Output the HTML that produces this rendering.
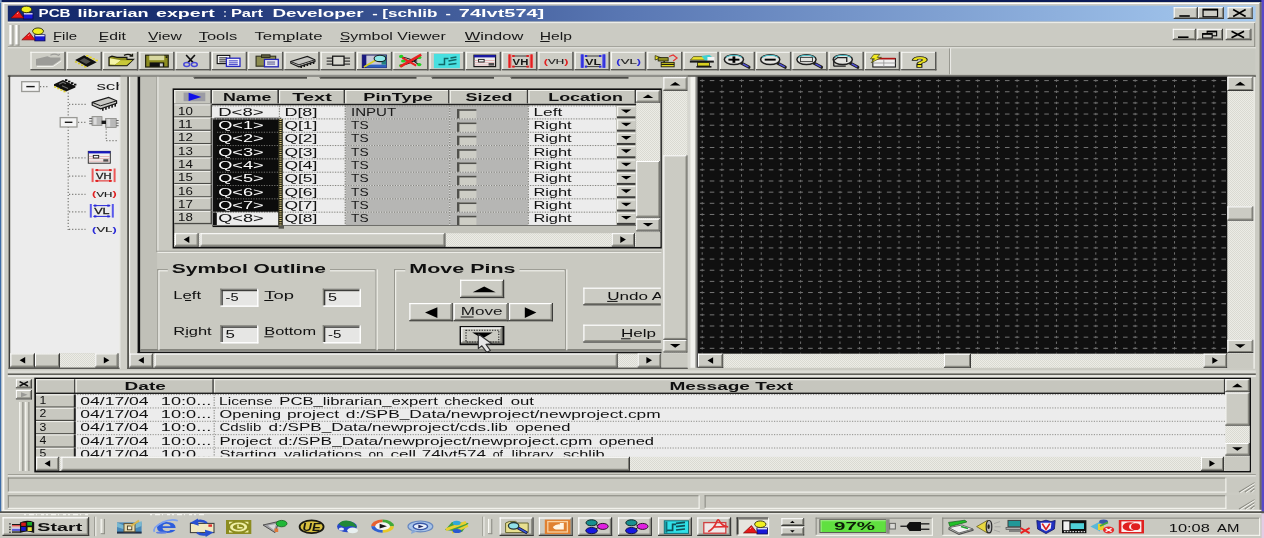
<!DOCTYPE html>
<html><head><meta charset="utf-8"><title>PCB librarian expert</title>
<style>
html,body{margin:0;padding:0;background:#cbcbc3;overflow:hidden}
svg{display:block;font-family:"Liberation Sans",sans-serif;filter:blur(0.5px)}
</style></head><body>
<svg width="1264" height="538" viewBox="0 0 1264 538">
<defs>
<pattern id="dith" width="2" height="2" patternUnits="userSpaceOnUse"><rect width="2" height="2" fill="#ecece6"/><rect width="1" height="1" fill="#dadad2"/><rect x="1" y="1" width="1" height="1" fill="#dadad2"/></pattern>
<linearGradient id="tgrad" x1="0" x2="1" y1="0" y2="0"><stop offset="0" stop-color="#15296c"/><stop offset="0.12" stop-color="#192f70"/><stop offset="0.5" stop-color="#5a78b4"/><stop offset="1" stop-color="#a6caf0"/></linearGradient>
<clipPath id="clipTree"><rect x="10.4" y="76.8" width="108.8" height="276"/></clipPath>
<clipPath id="clipMid"><rect x="140.4" y="76.8" width="520.4" height="273.4"/></clipPath>
</defs>
<rect x="0.00" y="0.00" width="1264.00" height="538.00" fill="#cbcbc3" />
<rect x="0.00" y="0.00" width="1264.00" height="2.00" fill="#0c1c58" />
<rect x="0.00" y="0.00" width="1.50" height="512.00" fill="#3c6ca8" />
<rect x="0.00" y="0.00" width="1.50" height="3.00" fill="#7c9cc8" />
<rect x="1.50" y="2.00" width="2.80" height="509.00" fill="#e4e4e0" />
<rect x="1261.40" y="0.00" width="3.00" height="512.00" fill="#5848c8" />
<rect x="1261.40" y="512.00" width="3.00" height="26.00" fill="#e4cce4" />
<rect x="2.20" y="2.00" width="1259.00" height="1.00" fill="#d3d3cb" />
<rect x="3.20" y="3.00" width="1257.00" height="1.00" fill="#ffffff" />
<rect x="3.20" y="3.00" width="1.00" height="508.00" fill="#ffffff" />
<rect x="1259.40" y="3.00" width="1.00" height="508.00" fill="#88887f" />
<rect x="1260.40" y="2.00" width="1.00" height="510.00" fill="#404040" />
<rect x="7.80" y="5.60" width="1247.80" height="15.80" fill="url(#tgrad)" />
<rect x="23.36" y="13.02" width="9.64" height="5.98" fill="#1818d8" stroke="#080850" stroke-width="0.8"/>
<rect x="23.80" y="13.15" width="8.76" height="1.30" fill="#e8e8f8" />
<ellipse cx="26.43" cy="9.38" rx="5.15" ry="3.25" fill="#f0f020" stroke="#303008" stroke-width="0.9"/>
<path d="M11.10,17.96 L23.58,17.96 L18.33,10.68 Z" fill="#e81818" stroke="#780808" stroke-width="0.7" />
<path d="M17.01,14.06 L18.33,12.50" fill="none" stroke="#ffb0b0" stroke-width="0.9" />
<text x="38.50" y="17.10" font-size="10.2" font-weight="bold" fill="#ffffff" textLength="32.10" lengthAdjust="spacingAndGlyphs" >PCB</text>
<text x="77.40" y="17.10" font-size="10.2" font-weight="bold" fill="#ffffff" textLength="71.20" lengthAdjust="spacingAndGlyphs" >librarian</text>
<text x="156.00" y="17.10" font-size="10.2" font-weight="bold" fill="#ffffff" textLength="58.80" lengthAdjust="spacingAndGlyphs" >expert</text>
<text x="223.40" y="17.10" font-size="10.2" font-weight="bold" fill="#ffffff" textLength="3.00" lengthAdjust="spacingAndGlyphs" >:</text>
<text x="230.90" y="17.10" font-size="10.2" font-weight="bold" fill="#ffffff" textLength="32.00" lengthAdjust="spacingAndGlyphs" >Part</text>
<text x="272.50" y="17.10" font-size="10.2" font-weight="bold" fill="#ffffff" textLength="91.20" lengthAdjust="spacingAndGlyphs" >Developer</text>
<text x="372.30" y="17.10" font-size="10.2" font-weight="bold" fill="#ffffff" textLength="5.50" lengthAdjust="spacingAndGlyphs" >-</text>
<text x="382.30" y="17.10" font-size="10.2" font-weight="bold" fill="#ffffff" textLength="55.10" lengthAdjust="spacingAndGlyphs" >[schlib</text>
<text x="445.60" y="17.10" font-size="10.2" font-weight="bold" fill="#ffffff" textLength="5.40" lengthAdjust="spacingAndGlyphs" >-</text>
<text x="458.80" y="17.10" font-size="10.2" font-weight="bold" fill="#ffffff" textLength="85.50" lengthAdjust="spacingAndGlyphs" >74lvt574]</text>
<rect x="1173.70" y="7.20" width="24.20" height="11.80" fill="#cbcbc3" />
<rect x="1173.70" y="7.20" width="23.20" height="1.00" fill="#ffffff" />
<rect x="1173.70" y="7.20" width="1.00" height="10.80" fill="#ffffff" />
<rect x="1173.70" y="18.00" width="24.20" height="1.00" fill="#3c3c3a" />
<rect x="1196.90" y="7.20" width="1.00" height="11.80" fill="#3c3c3a" />
<rect x="1174.70" y="17.00" width="22.20" height="1.00" fill="#808078" />
<rect x="1195.90" y="8.20" width="1.00" height="9.80" fill="#808078" />
<rect x="1179.30" y="15.20" width="10.50" height="1.60" fill="#000" />
<rect x="1198.20" y="7.20" width="25.70" height="11.80" fill="#cbcbc3" />
<rect x="1198.20" y="7.20" width="24.70" height="1.00" fill="#ffffff" />
<rect x="1198.20" y="7.20" width="1.00" height="10.80" fill="#ffffff" />
<rect x="1198.20" y="18.00" width="25.70" height="1.00" fill="#3c3c3a" />
<rect x="1222.90" y="7.20" width="1.00" height="11.80" fill="#3c3c3a" />
<rect x="1199.20" y="17.00" width="23.70" height="1.00" fill="#808078" />
<rect x="1221.90" y="8.20" width="1.00" height="9.80" fill="#808078" />
<rect x="1203.05" y="9.20" width="14.50" height="7.60" fill="none" stroke="#000" stroke-width="1.2"/>
<rect x="1203.05" y="9.00" width="14.50" height="1.60" fill="#000" />
<rect x="1227.60" y="7.20" width="25.10" height="11.80" fill="#cbcbc3" />
<rect x="1227.60" y="7.20" width="24.10" height="1.00" fill="#ffffff" />
<rect x="1227.60" y="7.20" width="1.00" height="10.80" fill="#ffffff" />
<rect x="1227.60" y="18.00" width="25.10" height="1.00" fill="#3c3c3a" />
<rect x="1251.70" y="7.20" width="1.00" height="11.80" fill="#3c3c3a" />
<rect x="1228.60" y="17.00" width="23.10" height="1.00" fill="#808078" />
<rect x="1250.70" y="8.20" width="1.00" height="9.80" fill="#808078" />
<path d="M1233.15,9.6 L1245.65,16.4 M1245.65,9.6 L1233.15,16.4" fill="none" stroke="#000" stroke-width="1.7" />
<rect x="7.80" y="22.20" width="1247.00" height="0.90" fill="#f4f4f0" />
<rect x="7.80" y="46.40" width="1247.00" height="1.00" fill="#8c8c84" />
<rect x="1254.20" y="23.00" width="1.00" height="24.00" fill="#8c8c84" />
<rect x="7.80" y="47.40" width="1247.80" height="1.00" fill="#fafaf6" />
<rect x="9.40" y="25.00" width="4.00" height="20.50" fill="#dcdcd6" />
<rect x="9.40" y="25.00" width="1.60" height="20.50" fill="#ffffff" />
<rect x="12.40" y="25.00" width="1.10" height="20.50" fill="#8c8c84" />
<rect x="9.40" y="44.60" width="4.00" height="1.00" fill="#8c8c84" />
<rect x="15.40" y="25.00" width="4.00" height="20.50" fill="#dcdcd6" />
<rect x="15.40" y="25.00" width="1.60" height="20.50" fill="#ffffff" />
<rect x="18.40" y="25.00" width="1.10" height="20.50" fill="#8c8c84" />
<rect x="15.40" y="44.60" width="4.00" height="1.00" fill="#8c8c84" />
<rect x="34.79" y="34.87" width="10.21" height="6.03" fill="#1818d8" stroke="#080850" stroke-width="0.8"/>
<rect x="35.26" y="35.01" width="9.28" height="1.31" fill="#e8e8f8" />
<ellipse cx="38.04" cy="31.21" rx="5.45" ry="3.27" fill="#f0f020" stroke="#303008" stroke-width="0.9"/>
<path d="M21.80,39.85 L35.02,39.85 L29.46,32.52 Z" fill="#e81818" stroke="#780808" stroke-width="0.7" />
<path d="M28.06,35.92 L29.46,34.35" fill="none" stroke="#ffb0b0" stroke-width="0.9" />
<text x="53.00" y="39.90" font-size="10.6" fill="#181818" textLength="24.00" lengthAdjust="spacingAndGlyphs" >File</text>
<line x1="53.50" y1="41.50" x2="58.80" y2="41.50" stroke="#181818" stroke-width="1" />
<text x="98.70" y="39.90" font-size="10.6" fill="#181818" textLength="27.10" lengthAdjust="spacingAndGlyphs" >Edit</text>
<line x1="99.20" y1="41.50" x2="106.40" y2="41.50" stroke="#181818" stroke-width="1" />
<text x="148.00" y="39.90" font-size="10.6" fill="#181818" textLength="33.80" lengthAdjust="spacingAndGlyphs" >View</text>
<line x1="148.50" y1="41.50" x2="157.00" y2="41.50" stroke="#181818" stroke-width="1" />
<text x="198.70" y="39.90" font-size="10.6" fill="#181818" textLength="38.50" lengthAdjust="spacingAndGlyphs" >Tools</text>
<line x1="199.00" y1="41.50" x2="206.80" y2="41.50" stroke="#181818" stroke-width="1" />
<text x="254.40" y="39.90" font-size="10.6" fill="#181818" textLength="68.10" lengthAdjust="spacingAndGlyphs" >Template</text>
<line x1="283.50" y1="41.50" x2="291.50" y2="41.50" stroke="#181818" stroke-width="1" />
<text x="339.70" y="39.90" font-size="10.6" fill="#181818" textLength="106.10" lengthAdjust="spacingAndGlyphs" >Symbol Viewer</text>
<line x1="340.20" y1="41.50" x2="349.00" y2="41.50" stroke="#181818" stroke-width="1" />
<text x="464.80" y="39.90" font-size="10.6" fill="#181818" textLength="58.50" lengthAdjust="spacingAndGlyphs" >Window</text>
<line x1="465.00" y1="41.50" x2="479.50" y2="41.50" stroke="#181818" stroke-width="1" />
<text x="539.70" y="39.90" font-size="10.6" fill="#181818" textLength="32.20" lengthAdjust="spacingAndGlyphs" >Help</text>
<line x1="540.20" y1="41.50" x2="549.60" y2="41.50" stroke="#181818" stroke-width="1" />
<rect x="1172.80" y="28.80" width="23.40" height="11.40" fill="#cbcbc3" />
<rect x="1172.80" y="28.80" width="22.40" height="1.00" fill="#ffffff" />
<rect x="1172.80" y="28.80" width="1.00" height="10.40" fill="#ffffff" />
<rect x="1172.80" y="39.20" width="23.40" height="1.00" fill="#3c3c3a" />
<rect x="1195.20" y="28.80" width="1.00" height="11.40" fill="#3c3c3a" />
<rect x="1173.80" y="38.20" width="21.40" height="1.00" fill="#808078" />
<rect x="1194.20" y="29.80" width="1.00" height="9.40" fill="#808078" />
<rect x="1178.00" y="36.40" width="10.50" height="1.60" fill="#000" />
<rect x="1197.30" y="28.80" width="25.70" height="11.40" fill="#cbcbc3" />
<rect x="1197.30" y="28.80" width="24.70" height="1.00" fill="#ffffff" />
<rect x="1197.30" y="28.80" width="1.00" height="10.40" fill="#ffffff" />
<rect x="1197.30" y="39.20" width="25.70" height="1.00" fill="#3c3c3a" />
<rect x="1222.00" y="28.80" width="1.00" height="11.40" fill="#3c3c3a" />
<rect x="1198.30" y="38.20" width="23.70" height="1.00" fill="#808078" />
<rect x="1221.00" y="29.80" width="1.00" height="9.40" fill="#808078" />
<rect x="1207.15" y="31.20" width="9.50" height="4.60" fill="none" stroke="#000" stroke-width="1.1"/>
<rect x="1207.15" y="31.00" width="9.50" height="1.40" fill="#000" />
<rect x="1202.65" y="33.60" width="9.50" height="4.40" fill="#cbcbc3" stroke="#000" stroke-width="1.1"/>
<rect x="1202.65" y="33.40" width="9.50" height="1.40" fill="#000" />
<rect x="1225.70" y="28.80" width="25.70" height="11.40" fill="#cbcbc3" />
<rect x="1225.70" y="28.80" width="24.70" height="1.00" fill="#ffffff" />
<rect x="1225.70" y="28.80" width="1.00" height="10.40" fill="#ffffff" />
<rect x="1225.70" y="39.20" width="25.70" height="1.00" fill="#3c3c3a" />
<rect x="1250.40" y="28.80" width="1.00" height="11.40" fill="#3c3c3a" />
<rect x="1226.70" y="38.20" width="23.70" height="1.00" fill="#808078" />
<rect x="1249.40" y="29.80" width="1.00" height="9.40" fill="#808078" />
<path d="M1231.5500000000002,31.2 L1244.0500000000002,37.8 M1244.0500000000002,31.2 L1231.5500000000002,37.8" fill="none" stroke="#000" stroke-width="1.7" />
<rect x="7.80" y="48.40" width="941.40" height="26.00" fill="#cbcbc3" />
<rect x="949.20" y="48.40" width="1.00" height="26.00" fill="#8c8c84" />
<rect x="950.20" y="48.40" width="1.00" height="26.00" fill="#f4f4f0" />
<rect x="951.20" y="48.40" width="304.00" height="26.00" fill="#c7c8c0" />
<rect x="30.40" y="51.80" width="35.28" height="18.40" fill="#cdcdc5" />
<rect x="30.40" y="51.80" width="35.28" height="1.00" fill="#f8f8f4" />
<rect x="30.40" y="51.80" width="1.20" height="18.40" fill="#f8f8f4" />
<rect x="30.40" y="69.00" width="35.28" height="1.40" fill="#585854" />
<rect x="64.28" y="51.80" width="1.50" height="18.60" fill="#585854" />
<rect x="66.68" y="51.80" width="35.28" height="18.40" fill="#cdcdc5" />
<rect x="66.68" y="51.80" width="35.28" height="1.00" fill="#f8f8f4" />
<rect x="66.68" y="51.80" width="1.20" height="18.40" fill="#f8f8f4" />
<rect x="66.68" y="69.00" width="35.28" height="1.40" fill="#585854" />
<rect x="100.56" y="51.80" width="1.50" height="18.60" fill="#585854" />
<rect x="102.96" y="51.80" width="35.28" height="18.40" fill="#cdcdc5" />
<rect x="102.96" y="51.80" width="35.28" height="1.00" fill="#f8f8f4" />
<rect x="102.96" y="51.80" width="1.20" height="18.40" fill="#f8f8f4" />
<rect x="102.96" y="69.00" width="35.28" height="1.40" fill="#585854" />
<rect x="136.84" y="51.80" width="1.50" height="18.60" fill="#585854" />
<rect x="139.24" y="51.80" width="35.28" height="18.40" fill="#cdcdc5" />
<rect x="139.24" y="51.80" width="35.28" height="1.00" fill="#f8f8f4" />
<rect x="139.24" y="51.80" width="1.20" height="18.40" fill="#f8f8f4" />
<rect x="139.24" y="69.00" width="35.28" height="1.40" fill="#585854" />
<rect x="173.12" y="51.80" width="1.50" height="18.60" fill="#585854" />
<rect x="175.52" y="51.80" width="35.28" height="18.40" fill="#cdcdc5" />
<rect x="175.52" y="51.80" width="35.28" height="1.00" fill="#f8f8f4" />
<rect x="175.52" y="51.80" width="1.20" height="18.40" fill="#f8f8f4" />
<rect x="175.52" y="69.00" width="35.28" height="1.40" fill="#585854" />
<rect x="209.40" y="51.80" width="1.50" height="18.60" fill="#585854" />
<rect x="211.80" y="51.80" width="35.28" height="18.40" fill="#cdcdc5" />
<rect x="211.80" y="51.80" width="35.28" height="1.00" fill="#f8f8f4" />
<rect x="211.80" y="51.80" width="1.20" height="18.40" fill="#f8f8f4" />
<rect x="211.80" y="69.00" width="35.28" height="1.40" fill="#585854" />
<rect x="245.68" y="51.80" width="1.50" height="18.60" fill="#585854" />
<rect x="248.08" y="51.80" width="35.28" height="18.40" fill="#cdcdc5" />
<rect x="248.08" y="51.80" width="35.28" height="1.00" fill="#f8f8f4" />
<rect x="248.08" y="51.80" width="1.20" height="18.40" fill="#f8f8f4" />
<rect x="248.08" y="69.00" width="35.28" height="1.40" fill="#585854" />
<rect x="281.96" y="51.80" width="1.50" height="18.60" fill="#585854" />
<rect x="284.36" y="51.80" width="35.28" height="18.40" fill="#cdcdc5" />
<rect x="284.36" y="51.80" width="35.28" height="1.00" fill="#f8f8f4" />
<rect x="284.36" y="51.80" width="1.20" height="18.40" fill="#f8f8f4" />
<rect x="284.36" y="69.00" width="35.28" height="1.40" fill="#585854" />
<rect x="318.24" y="51.80" width="1.50" height="18.60" fill="#585854" />
<rect x="320.64" y="51.80" width="35.28" height="18.40" fill="#cdcdc5" />
<rect x="320.64" y="51.80" width="35.28" height="1.00" fill="#f8f8f4" />
<rect x="320.64" y="51.80" width="1.20" height="18.40" fill="#f8f8f4" />
<rect x="320.64" y="69.00" width="35.28" height="1.40" fill="#585854" />
<rect x="354.52" y="51.80" width="1.50" height="18.60" fill="#585854" />
<rect x="356.92" y="51.80" width="35.28" height="18.40" fill="#cdcdc5" />
<rect x="356.92" y="51.80" width="35.28" height="1.00" fill="#f8f8f4" />
<rect x="356.92" y="51.80" width="1.20" height="18.40" fill="#f8f8f4" />
<rect x="356.92" y="69.00" width="35.28" height="1.40" fill="#585854" />
<rect x="390.80" y="51.80" width="1.50" height="18.60" fill="#585854" />
<rect x="393.20" y="51.80" width="35.28" height="18.40" fill="#cdcdc5" />
<rect x="393.20" y="51.80" width="35.28" height="1.00" fill="#f8f8f4" />
<rect x="393.20" y="51.80" width="1.20" height="18.40" fill="#f8f8f4" />
<rect x="393.20" y="69.00" width="35.28" height="1.40" fill="#585854" />
<rect x="427.08" y="51.80" width="1.50" height="18.60" fill="#585854" />
<rect x="429.48" y="51.80" width="35.28" height="18.40" fill="#cdcdc5" />
<rect x="429.48" y="51.80" width="35.28" height="1.00" fill="#f8f8f4" />
<rect x="429.48" y="51.80" width="1.20" height="18.40" fill="#f8f8f4" />
<rect x="429.48" y="69.00" width="35.28" height="1.40" fill="#585854" />
<rect x="463.36" y="51.80" width="1.50" height="18.60" fill="#585854" />
<rect x="465.76" y="51.80" width="35.28" height="18.40" fill="#cdcdc5" />
<rect x="465.76" y="51.80" width="35.28" height="1.00" fill="#f8f8f4" />
<rect x="465.76" y="51.80" width="1.20" height="18.40" fill="#f8f8f4" />
<rect x="465.76" y="69.00" width="35.28" height="1.40" fill="#585854" />
<rect x="499.64" y="51.80" width="1.50" height="18.60" fill="#585854" />
<rect x="502.04" y="51.80" width="35.28" height="18.40" fill="#cdcdc5" />
<rect x="502.04" y="51.80" width="35.28" height="1.00" fill="#f8f8f4" />
<rect x="502.04" y="51.80" width="1.20" height="18.40" fill="#f8f8f4" />
<rect x="502.04" y="69.00" width="35.28" height="1.40" fill="#585854" />
<rect x="535.92" y="51.80" width="1.50" height="18.60" fill="#585854" />
<rect x="538.32" y="51.80" width="35.28" height="18.40" fill="#cdcdc5" />
<rect x="538.32" y="51.80" width="35.28" height="1.00" fill="#f8f8f4" />
<rect x="538.32" y="51.80" width="1.20" height="18.40" fill="#f8f8f4" />
<rect x="538.32" y="69.00" width="35.28" height="1.40" fill="#585854" />
<rect x="572.20" y="51.80" width="1.50" height="18.60" fill="#585854" />
<rect x="574.60" y="51.80" width="35.28" height="18.40" fill="#cdcdc5" />
<rect x="574.60" y="51.80" width="35.28" height="1.00" fill="#f8f8f4" />
<rect x="574.60" y="51.80" width="1.20" height="18.40" fill="#f8f8f4" />
<rect x="574.60" y="69.00" width="35.28" height="1.40" fill="#585854" />
<rect x="608.48" y="51.80" width="1.50" height="18.60" fill="#585854" />
<rect x="610.88" y="51.80" width="35.28" height="18.40" fill="#cdcdc5" />
<rect x="610.88" y="51.80" width="35.28" height="1.00" fill="#f8f8f4" />
<rect x="610.88" y="51.80" width="1.20" height="18.40" fill="#f8f8f4" />
<rect x="610.88" y="69.00" width="35.28" height="1.40" fill="#585854" />
<rect x="644.76" y="51.80" width="1.50" height="18.60" fill="#585854" />
<rect x="647.16" y="51.80" width="35.28" height="18.40" fill="#cdcdc5" />
<rect x="647.16" y="51.80" width="35.28" height="1.00" fill="#f8f8f4" />
<rect x="647.16" y="51.80" width="1.20" height="18.40" fill="#f8f8f4" />
<rect x="647.16" y="69.00" width="35.28" height="1.40" fill="#585854" />
<rect x="681.04" y="51.80" width="1.50" height="18.60" fill="#585854" />
<rect x="683.44" y="51.80" width="35.28" height="18.40" fill="#cdcdc5" />
<rect x="683.44" y="51.80" width="35.28" height="1.00" fill="#f8f8f4" />
<rect x="683.44" y="51.80" width="1.20" height="18.40" fill="#f8f8f4" />
<rect x="683.44" y="69.00" width="35.28" height="1.40" fill="#585854" />
<rect x="717.32" y="51.80" width="1.50" height="18.60" fill="#585854" />
<rect x="719.72" y="51.80" width="35.28" height="18.40" fill="#cdcdc5" />
<rect x="719.72" y="51.80" width="35.28" height="1.00" fill="#f8f8f4" />
<rect x="719.72" y="51.80" width="1.20" height="18.40" fill="#f8f8f4" />
<rect x="719.72" y="69.00" width="35.28" height="1.40" fill="#585854" />
<rect x="753.60" y="51.80" width="1.50" height="18.60" fill="#585854" />
<rect x="756.00" y="51.80" width="35.28" height="18.40" fill="#cdcdc5" />
<rect x="756.00" y="51.80" width="35.28" height="1.00" fill="#f8f8f4" />
<rect x="756.00" y="51.80" width="1.20" height="18.40" fill="#f8f8f4" />
<rect x="756.00" y="69.00" width="35.28" height="1.40" fill="#585854" />
<rect x="789.88" y="51.80" width="1.50" height="18.60" fill="#585854" />
<rect x="792.28" y="51.80" width="35.28" height="18.40" fill="#cdcdc5" />
<rect x="792.28" y="51.80" width="35.28" height="1.00" fill="#f8f8f4" />
<rect x="792.28" y="51.80" width="1.20" height="18.40" fill="#f8f8f4" />
<rect x="792.28" y="69.00" width="35.28" height="1.40" fill="#585854" />
<rect x="826.16" y="51.80" width="1.50" height="18.60" fill="#585854" />
<rect x="828.56" y="51.80" width="35.28" height="18.40" fill="#cdcdc5" />
<rect x="828.56" y="51.80" width="35.28" height="1.00" fill="#f8f8f4" />
<rect x="828.56" y="51.80" width="1.20" height="18.40" fill="#f8f8f4" />
<rect x="828.56" y="69.00" width="35.28" height="1.40" fill="#585854" />
<rect x="862.44" y="51.80" width="1.50" height="18.60" fill="#585854" />
<rect x="864.84" y="51.80" width="35.28" height="18.40" fill="#cdcdc5" />
<rect x="864.84" y="51.80" width="35.28" height="1.00" fill="#f8f8f4" />
<rect x="864.84" y="51.80" width="1.20" height="18.40" fill="#f8f8f4" />
<rect x="864.84" y="69.00" width="35.28" height="1.40" fill="#585854" />
<rect x="898.72" y="51.80" width="1.50" height="18.60" fill="#585854" />
<rect x="901.12" y="51.80" width="35.28" height="18.40" fill="#cdcdc5" />
<rect x="901.12" y="51.80" width="35.28" height="1.00" fill="#f8f8f4" />
<rect x="901.12" y="51.80" width="1.20" height="18.40" fill="#f8f8f4" />
<rect x="901.12" y="69.00" width="35.28" height="1.40" fill="#585854" />
<rect x="935.00" y="51.80" width="1.50" height="18.60" fill="#585854" />
<path d="M36.0,65.6 L36.0,59 L47.4,56.2 L50.4,57.6 L60.4,57.6 L60.4,60 L52.4,65.6 Z" fill="#9c9c98" stroke="none" stroke-width="1" />
<path d="M50.4,55.2 q4,-2 8,0 l1.5,-1" fill="none" stroke="#9c9c98" stroke-width="1.2" />
<path d="M37.0,66.4 L53.4,66.4 L61.4,60.8" fill="none" stroke="#f4f4f0" stroke-width="1" />
<path d="M75.18,60 L84.18,55.2 L96.68,62.2 L87.18,67 Z" fill="#101010" stroke="none" stroke-width="1" />
<rect x="86.18" y="55.00" width="2.40" height="1.60" fill="#e8d820" />
<rect x="74.88" y="61.20" width="2.20" height="1.50" fill="#d8c820" />
<rect x="89.28" y="56.55" width="2.40" height="1.60" fill="#e8d820" />
<rect x="77.98" y="62.80" width="2.20" height="1.50" fill="#d8c820" />
<rect x="92.38" y="58.10" width="2.40" height="1.60" fill="#e8d820" />
<rect x="81.08" y="64.40" width="2.20" height="1.50" fill="#d8c820" />
<rect x="95.48" y="59.65" width="2.40" height="1.60" fill="#e8d820" />
<rect x="84.18" y="66.00" width="2.20" height="1.50" fill="#d8c820" />
<path d="M79.68,60.4 L84.18,58 L90.68,61.6 L86.18,64 Z" fill="#50504c" stroke="none" stroke-width="1" />
<path d="M108.96000000000001,65.8 L108.96000000000001,57.4 L111.96000000000001,56.2 L116.96000000000001,57.4 L126.96000000000001,57.4 L126.96000000000001,59.4 L133.56,59.4 L126.96000000000001,65.8 Z" fill="#8c8c20" stroke="#181810" stroke-width="1.1" />
<path d="M109.96000000000001,64.6 L109.96000000000001,58.2 L120.96000000000001,60.2 L114.96000000000001,64.8 Z" fill="#f4f4a8" stroke="none" stroke-width="1" />
<path d="M114.96000000000001,65 L120.96000000000001,60.2 L132.56,60.2 L126.56,65 Z" fill="#c8c838" stroke="none" stroke-width="1" />
<path d="M123.96000000000001,55.4 q4,-2.2 8,0 m0.6,-1.6 l0,2.4 l-3,0" fill="none" stroke="#181810" stroke-width="1.2" />
<rect x="145.64" y="55.20" width="22.60" height="11.80" fill="#8c8c20" stroke="#202010" stroke-width="1.2"/>
<rect x="149.24" y="55.60" width="15.00" height="4.60" fill="#d8d8a0" />
<rect x="149.64" y="62.40" width="14.60" height="4.40" fill="#101010" />
<rect x="159.84" y="63.40" width="3.00" height="3.00" fill="#d0d0d0" />
<rect x="165.64" y="56.20" width="1.80" height="1.80" fill="#202010" />
<path d="M186.12,55 L193.12,62.6 M194.92000000000002,55 L187.92000000000002,62.6" fill="none" stroke="#101010" stroke-width="1.6" />
<ellipse cx="186.72" cy="64.4" rx="2.9" ry="2.0" fill="none" stroke="#4848d8" stroke-width="1.5"/>
<ellipse cx="194.32000000000002" cy="64.4" rx="2.9" ry="2.0" fill="none" stroke="#4848d8" stroke-width="1.5"/>
<rect x="217.20" y="55.40" width="12.60" height="8.20" fill="#f4f4f4" stroke="#101010" stroke-width="1.1"/>
<rect x="219.20" y="57.40" width="8.00" height="0.90" fill="#101010" />
<rect x="219.20" y="59.40" width="8.00" height="0.90" fill="#101010" />
<rect x="219.20" y="61.40" width="8.00" height="0.90" fill="#101010" />
<rect x="226.40" y="58.20" width="13.60" height="8.20" fill="#f4f4f8" stroke="#2828c0" stroke-width="1.3"/>
<rect x="228.80" y="60.40" width="9.00" height="0.90" fill="#2828c0" />
<rect x="228.80" y="62.40" width="9.00" height="0.90" fill="#2828c0" />
<rect x="228.80" y="64.20" width="9.00" height="0.90" fill="#2828c0" />
<rect x="256.08" y="56.20" width="19.60" height="10.00" fill="#8c8c50" stroke="#303020" stroke-width="1.1"/>
<rect x="261.48" y="54.80" width="8.60" height="2.60" fill="#606040" stroke="#202010" stroke-width="0.8"/>
<rect x="264.48" y="59.40" width="13.80" height="7.40" fill="#e8e8f0" stroke="#2828b8" stroke-width="1.3"/>
<rect x="267.08" y="61.60" width="8.00" height="0.90" fill="#404080" />
<rect x="267.08" y="63.60" width="8.00" height="0.90" fill="#404080" />
<path d="M290.76,61.6 L307.36,56.4 L314.96000000000004,59.8 L314.96000000000004,61.6 L298.96000000000004,66.8 L290.76,63.2 Z" fill="#c4c4c0" stroke="#181818" stroke-width="1.1" />
<path d="M290.76,61.6 L298.96000000000004,64.8 L314.96000000000004,59.8" fill="none" stroke="#181818" stroke-width="0.9" />
<rect x="300.36" y="65.60" width="1.60" height="2.40" fill="#181818" />
<rect x="303.46" y="64.60" width="1.60" height="2.40" fill="#181818" />
<rect x="306.56" y="63.60" width="1.60" height="2.40" fill="#181818" />
<rect x="309.66" y="62.60" width="1.60" height="2.40" fill="#181818" />
<rect x="312.76" y="61.60" width="1.60" height="2.40" fill="#181818" />
<rect x="332.64" y="56.20" width="11.40" height="9.00" fill="#d8d8d0" stroke="#181818" stroke-width="1.3"/>
<rect x="326.64" y="57.60" width="6.00" height="1.00" fill="#181818" />
<rect x="344.04" y="57.60" width="6.00" height="1.00" fill="#181818" />
<rect x="326.64" y="60.60" width="6.00" height="1.00" fill="#181818" />
<rect x="344.04" y="60.60" width="6.00" height="1.00" fill="#181818" />
<rect x="326.64" y="63.60" width="6.00" height="1.00" fill="#181818" />
<rect x="344.04" y="63.60" width="6.00" height="1.00" fill="#181818" />
<rect x="362.32" y="55.00" width="24.00" height="12.60" fill="#c8c8d8" stroke="#181860" stroke-width="1"/>
<rect x="362.32" y="55.00" width="4.00" height="12.60" fill="#181880" />
<rect x="366.32" y="64.60" width="20.00" height="3.00" fill="#3060c0" />
<rect x="381.52" y="55.60" width="4.60" height="9.00" fill="#208080" />
<path d="M363.91999999999996,67 L375.91999999999996,60" fill="none" stroke="#d8d020" stroke-width="1.6" />
<ellipse cx="379.91999999999996" cy="58.4" rx="5.8" ry="3.2" fill="#90e8e8" stroke="#182020" stroke-width="1.1"/>
<path d="M401.2,57 q10,1 18,8 M401.2,65 q10,-1 18,-8 M405.2,61 l12,0" fill="none" stroke="#181818" stroke-width="1.1" />
<ellipse cx="401.2" cy="56.4" rx="2.2" ry="1.6" fill="#20d020"/>
<ellipse cx="401.2" cy="65.6" rx="2.2" ry="1.6" fill="#20d020"/>
<ellipse cx="419.2" cy="57.4" rx="2.2" ry="1.6" fill="#20d020"/>
<ellipse cx="419.2" cy="64.6" rx="2.2" ry="1.6" fill="#20d020"/>
<ellipse cx="403.2" cy="61" rx="2.2" ry="1.6" fill="#20d020"/>
<path d="M400.2,66.6 L421.2,54.6" fill="none" stroke="#e82020" stroke-width="2.6" />
<path d="M402.2,57.6 L416.2,65.6" fill="none" stroke="#e82020" stroke-width="2.0" />
<rect x="433.88" y="53.80" width="26.00" height="14.40" fill="#48e0e0" />
<path d="M438.48,64.4 l6,0 l0,-6 l4,0 M448.48,61 l8,-1.4 M448.48,64.4 l8,-1 M450.48,58 l6,-1" fill="none" stroke="#106868" stroke-width="1.5" />
<rect x="473.96" y="55.20" width="21.60" height="11.40" fill="#ececec" stroke="#181818" stroke-width="1.2"/>
<rect x="473.96" y="55.00" width="21.60" height="2.40" fill="#1818a0" />
<rect x="474.56" y="60.00" width="20.00" height="0.70" fill="#e0a0a0" />
<rect x="474.56" y="62.40" width="20.00" height="0.70" fill="#e0a0a0" />
<rect x="474.56" y="64.60" width="20.00" height="0.70" fill="#e0a0a0" />
<rect x="478.56" y="59.40" width="5.60" height="2.60" fill="#f0f0f0" stroke="#181818" stroke-width="0.9"/>
<rect x="488.56" y="63.00" width="5.60" height="2.60" fill="#505050" />
<rect x="508.04" y="54.40" width="3.40" height="13.40" fill="#ec5858" />
<rect x="529.64" y="54.40" width="3.40" height="13.40" fill="#ec5858" />
<rect x="508.84" y="54.40" width="1.40" height="13.40" fill="#e02020" />
<rect x="530.84" y="54.40" width="1.40" height="13.40" fill="#e02020" />
<line x1="512.54" y1="56.00" x2="528.54" y2="56.00" stroke="#303030" stroke-width="0.9" />
<line x1="512.54" y1="66.60" x2="528.54" y2="66.60" stroke="#303030" stroke-width="0.9" />
<rect x="512.24" y="55.00" width="2.40" height="2.00" fill="#e02020" />
<rect x="526.44" y="55.00" width="2.40" height="2.00" fill="#e02020" />
<rect x="512.24" y="65.60" width="2.40" height="2.00" fill="#e02020" />
<rect x="526.44" y="65.60" width="2.40" height="2.00" fill="#e02020" />
<text x="512.64" y="64.70" font-size="9.8" font-weight="bold" fill="#181818" textLength="15.80" lengthAdjust="spacingAndGlyphs" >VH</text>
<text x="543.72" y="63.60" font-size="7.6" font-weight="bold" fill="#e02020" textLength="4.20" lengthAdjust="spacingAndGlyphs" >(</text>
<text x="564.32" y="63.60" font-size="7.6" font-weight="bold" fill="#e02020" textLength="4.20" lengthAdjust="spacingAndGlyphs" >)</text>
<text x="548.12" y="63.80" font-size="7.8" fill="#202020" textLength="16.00" lengthAdjust="spacingAndGlyphs" stroke="#202020" stroke-width="0.15">VH</text>
<rect x="580.60" y="54.40" width="3.40" height="13.40" fill="#5858ec" />
<rect x="602.20" y="54.40" width="3.40" height="13.40" fill="#5858ec" />
<rect x="581.40" y="54.40" width="1.40" height="13.40" fill="#2828d8" />
<rect x="603.40" y="54.40" width="1.40" height="13.40" fill="#2828d8" />
<line x1="585.10" y1="56.00" x2="601.10" y2="56.00" stroke="#303030" stroke-width="0.9" />
<line x1="585.10" y1="66.60" x2="601.10" y2="66.60" stroke="#303030" stroke-width="0.9" />
<rect x="584.80" y="55.00" width="2.40" height="2.00" fill="#2828d8" />
<rect x="599.00" y="55.00" width="2.40" height="2.00" fill="#2828d8" />
<rect x="584.80" y="65.60" width="2.40" height="2.00" fill="#2828d8" />
<rect x="599.00" y="65.60" width="2.40" height="2.00" fill="#2828d8" />
<text x="585.20" y="64.70" font-size="9.8" font-weight="bold" fill="#181818" textLength="15.80" lengthAdjust="spacingAndGlyphs" >VL</text>
<text x="616.28" y="63.60" font-size="7.6" font-weight="bold" fill="#2828d8" textLength="4.20" lengthAdjust="spacingAndGlyphs" >(</text>
<text x="636.88" y="63.60" font-size="7.6" font-weight="bold" fill="#2828d8" textLength="4.20" lengthAdjust="spacingAndGlyphs" >)</text>
<text x="620.68" y="63.80" font-size="7.8" fill="#202020" textLength="16.00" lengthAdjust="spacingAndGlyphs" stroke="#202020" stroke-width="0.15">VL</text>
<path d="M655.16,55.6 L655.16,60 L661.16,57.8 Z" fill="#e8e020" stroke="#303010" stroke-width="0.8" />
<rect x="658.16" y="57.60" width="10.00" height="3.40" fill="#8c8c20" stroke="#202010" stroke-width="0.8"/>
<rect x="661.16" y="62.40" width="13.00" height="4.40" fill="#e0d820" stroke="#202010" stroke-width="0.9"/>
<rect x="661.16" y="63.80" width="13.00" height="1.20" fill="#202010" />
<path d="M669.16,56.6 l4,-1.6 l4,3 l-4,3" fill="none" stroke="#e83030" stroke-width="1.1" />
<path d="M664.16,61 L664.16,62.4" fill="none" stroke="#202010" stroke-width="1.4" />
<path d="M690.4399999999999,60 L693.4399999999999,56.6 L703.4399999999999,56.6 L706.4399999999999,60 Z" fill="#e8e030" stroke="#404010" stroke-width="0.7" />
<path d="M701.4399999999999,56 L709.4399999999999,54.8 L713.4399999999999,58.2 L705.4399999999999,61 Z" fill="#40d0d0" stroke="none" stroke-width="1" />
<path d="M707.4399999999999,57 L714.4399999999999,57 L714.4399999999999,61.6 L707.4399999999999,61.6 Z" fill="#f4f4f4" stroke="none" stroke-width="1" />
<rect x="689.84" y="60.60" width="24.00" height="2.00" fill="#181818" />
<rect x="697.44" y="62.60" width="12.00" height="3.40" fill="#d8d020" stroke="#202010" stroke-width="0.8"/>
<rect x="696.44" y="66.00" width="15.00" height="1.60" fill="#181818" />
<path d="M740.92,62.80 L748.92,67.20" fill="none" stroke="#202020" stroke-width="3.2" stroke-linecap="round"/>
<path d="M742.92,63.80 L748.42,66.80" fill="none" stroke="#5050d8" stroke-width="1.5" />
<ellipse cx="733.92" cy="59.60" rx="9.6" ry="4.9" fill="#e4e4e0" stroke="#202020" stroke-width="1.5"/>
<path d="M725.92,57.40 A9.6,4.9 0 0 1 741.92,57.40" fill="none" stroke="#50c8d0" stroke-width="1.1"/>
<rect x="728.42" y="58.70" width="11.00" height="1.90" fill="#000" />
<rect x="732.52" y="56.40" width="2.80" height="6.40" fill="#000" />
<path d="M777.20,62.80 L785.20,67.20" fill="none" stroke="#202020" stroke-width="3.2" stroke-linecap="round"/>
<path d="M779.20,63.80 L784.70,66.80" fill="none" stroke="#5050d8" stroke-width="1.5" />
<ellipse cx="770.20" cy="59.60" rx="9.6" ry="4.9" fill="#e4e4e0" stroke="#202020" stroke-width="1.5"/>
<path d="M762.20,57.40 A9.6,4.9 0 0 1 778.20,57.40" fill="none" stroke="#50c8d0" stroke-width="1.1"/>
<rect x="764.70" y="58.70" width="11.00" height="1.90" fill="#000" />
<path d="M813.48,62.80 L821.48,67.20" fill="none" stroke="#202020" stroke-width="3.2" stroke-linecap="round"/>
<path d="M815.48,63.80 L820.98,66.80" fill="none" stroke="#5050d8" stroke-width="1.5" />
<ellipse cx="806.48" cy="59.60" rx="9.6" ry="4.9" fill="#e4e4e0" stroke="#202020" stroke-width="1.5"/>
<path d="M798.48,57.40 A9.6,4.9 0 0 1 814.48,57.40" fill="none" stroke="#50c8d0" stroke-width="1.1"/>
<rect x="800.48" y="57.40" width="12.00" height="4.20" fill="none" stroke="#404040" stroke-width="1"/>
<path d="M849.76,62.80 L857.76,67.20" fill="none" stroke="#202020" stroke-width="3.2" stroke-linecap="round"/>
<path d="M851.76,63.80 L857.26,66.80" fill="none" stroke="#5050d8" stroke-width="1.5" />
<ellipse cx="842.76" cy="59.60" rx="9.6" ry="4.9" fill="#e4e4e0" stroke="#202020" stroke-width="1.5"/>
<path d="M834.76,57.40 A9.6,4.9 0 0 1 850.76,57.40" fill="none" stroke="#50c8d0" stroke-width="1.1"/>
<path d="M833.76,66.20 L833.76,60.60 L837.76,57.60 L846.76,57.60 L846.76,62.10 M833.76,66.20 L845.76,66.20" fill="none" stroke="#202020" stroke-width="1.3" />
<rect x="872.84" y="58.60" width="22.60" height="8.40" fill="#f0f0f0" stroke="#202020" stroke-width="1.1"/>
<rect x="876.84" y="57.80" width="18.60" height="1.60" fill="#b01010" />
<rect x="872.84" y="62.60" width="22.60" height="0.80" fill="#909090" />
<rect x="883.44" y="59.60" width="0.80" height="7.40" fill="#909090" />
<path d="M873.84,54.4 L879.84,54.4 L877.24,57.4 L881.44,57.4 L871.24,62.6 L874.44,58.8 L870.44,58.8 Z" fill="#f0e820" stroke="#404010" stroke-width="0.7" />
<text x="911.72" y="66.80" font-size="15.4" font-weight="bold" fill="#e8e020" textLength="16.40" lengthAdjust="spacingAndGlyphs" stroke="#181808" stroke-width="1.3" paint-order="stroke">?</text>
<rect x="7.80" y="74.70" width="1248.00" height="0.80" fill="#a4a49c" />
<rect x="7.80" y="75.40" width="1248.00" height="1.40" fill="#454541" />
<rect x="120.60" y="74.70" width="567.00" height="0.80" fill="#c0c0b8" />
<rect x="120.60" y="75.40" width="567.00" height="1.40" fill="#8e8e88" />
<rect x="8.60" y="75.60" width="1.80" height="293.40" fill="#3c3c3a" />
<rect x="10.40" y="76.80" width="109.00" height="276.60" fill="#ececec" />
<rect x="119.40" y="76.80" width="1.20" height="292.00" fill="#f6f6f2" />
<rect x="120.60" y="76.80" width="6.60" height="292.00" fill="#cfcfc7" />
<rect x="127.20" y="76.80" width="1.80" height="292.00" fill="#55554f" />
<rect x="129.00" y="76.80" width="1.40" height="292.00" fill="#f6f6f2" />
<rect x="130.40" y="76.80" width="7.00" height="292.00" fill="#cfcfc7" />
<line x1="68.20" y1="92.60" x2="68.20" y2="230.00" stroke="#787874" stroke-width="1.2" stroke-dasharray="1.2 1.9"/>
<line x1="40.00" y1="86.60" x2="49.00" y2="86.60" stroke="#787874" stroke-width="1.2" stroke-dasharray="1.2 1.9"/>
<line x1="69.00" y1="104.30" x2="86.00" y2="104.30" stroke="#787874" stroke-width="1.2" stroke-dasharray="1.2 1.9"/>
<line x1="78.00" y1="122.30" x2="87.00" y2="122.30" stroke="#787874" stroke-width="1.2" stroke-dasharray="1.2 1.9"/>
<line x1="106.20" y1="128.40" x2="106.20" y2="140.60" stroke="#787874" stroke-width="1.2" stroke-dasharray="1.2 1.9"/>
<line x1="106.20" y1="140.60" x2="117.50" y2="140.60" stroke="#787874" stroke-width="1.2" stroke-dasharray="1.2 1.9"/>
<line x1="69.00" y1="157.80" x2="85.50" y2="157.80" stroke="#787874" stroke-width="1.2" stroke-dasharray="1.2 1.9"/>
<line x1="69.00" y1="176.20" x2="85.50" y2="176.20" stroke="#787874" stroke-width="1.2" stroke-dasharray="1.2 1.9"/>
<line x1="69.00" y1="194.30" x2="85.50" y2="194.30" stroke="#787874" stroke-width="1.2" stroke-dasharray="1.2 1.9"/>
<line x1="69.00" y1="211.80" x2="85.50" y2="211.80" stroke="#787874" stroke-width="1.2" stroke-dasharray="1.2 1.9"/>
<line x1="69.00" y1="229.40" x2="85.50" y2="229.40" stroke="#787874" stroke-width="1.2" stroke-dasharray="1.2 1.9"/>
<rect x="21.70" y="81.70" width="17.60" height="9.80" fill="#f4f4f4" stroke="#9a9a96" stroke-width="1.3"/>
<rect x="26.30" y="85.90" width="8.40" height="1.40" fill="#181818" />
<rect x="60.20" y="117.60" width="16.80" height="9.40" fill="#f4f4f4" stroke="#9a9a96" stroke-width="1.3"/>
<rect x="64.80" y="121.60" width="7.60" height="1.40" fill="#181818" />
<path d="M54,84.19999999999999 L63,80.0 L75.4,86.0 L75.4,87.39999999999999 L66,91.6 L54,85.8 Z" fill="#101010" stroke="none" stroke-width="1" />
<rect x="65.00" y="79.20" width="2.40" height="1.80" fill="#101010" />
<rect x="54.20" y="86.20" width="2.00" height="1.60" fill="#e0d020" />
<rect x="68.00" y="80.70" width="2.40" height="1.80" fill="#101010" />
<rect x="57.30" y="87.70" width="2.00" height="1.60" fill="#e0d020" />
<rect x="71.00" y="82.20" width="2.40" height="1.80" fill="#101010" />
<rect x="60.40" y="89.20" width="2.00" height="1.60" fill="#e0d020" />
<rect x="74.00" y="83.70" width="2.40" height="1.80" fill="#101010" />
<rect x="63.50" y="90.70" width="2.00" height="1.60" fill="#e0d020" />
<path d="M59,84.19999999999999 L63,82.19999999999999 L66,83.8 M62,85.8 L68,88.6" fill="none" stroke="#6a6a6a" stroke-width="1.1" />
<text x="96.40" y="89.60" font-size="10.8" fill="#181818" textLength="48.50" lengthAdjust="spacingAndGlyphs" clip-path="url(#clipTree)">schlib</text>
<path d="M92.19999999999999,102.39999999999999 L108.6,97.39999999999999 L116.6,100.8 L116.6,103.2 L100.6,108.8 L92.19999999999999,105.2 Z" fill="#c8c8c4" stroke="#181818" stroke-width="1.2" />
<path d="M92.19999999999999,102.39999999999999 L100.6,105.8 L116.6,100.8" fill="none" stroke="#181818" stroke-width="1" />
<rect x="102.00" y="108.00" width="1.60" height="2.80" fill="#181818" />
<rect x="105.10" y="106.95" width="1.60" height="2.80" fill="#181818" />
<rect x="108.20" y="105.90" width="1.60" height="2.80" fill="#181818" />
<rect x="111.30" y="104.85" width="1.60" height="2.80" fill="#181818" />
<rect x="114.40" y="103.80" width="1.60" height="2.80" fill="#181818" />
<rect x="92.00" y="116.60" width="10.00" height="8.80" fill="#b8b8b8" stroke="#8a8a86" stroke-width="0.8"/>
<rect x="105.60" y="118.40" width="10.60" height="9.00" fill="#b8b8b8" stroke="#8a8a86" stroke-width="0.8"/>
<rect x="93.60" y="117.40" width="3.00" height="7.20" fill="#dcdcdc" />
<rect x="107.20" y="119.20" width="3.00" height="7.40" fill="#dcdcdc" />
<rect x="101.60" y="120.60" width="4.40" height="3.40" fill="#181818" />
<rect x="89.20" y="118.00" width="3.00" height="1.00" fill="#606060" />
<rect x="116.20" y="120.00" width="2.40" height="1.00" fill="#606060" />
<rect x="89.20" y="120.60" width="3.00" height="1.00" fill="#606060" />
<rect x="116.20" y="122.60" width="2.40" height="1.00" fill="#606060" />
<rect x="89.20" y="123.20" width="3.00" height="1.00" fill="#606060" />
<rect x="116.20" y="125.20" width="2.40" height="1.00" fill="#606060" />
<rect x="88.30" y="151.40" width="22.00" height="11.80" fill="#f0f0f0" stroke="#303030" stroke-width="1"/>
<rect x="88.30" y="151.20" width="22.00" height="2.20" fill="#1818c0" />
<rect x="88.90" y="156.00" width="20.80" height="0.70" fill="#e0a0a0" />
<rect x="88.90" y="158.40" width="20.80" height="0.70" fill="#e0a0a0" />
<rect x="88.90" y="160.80" width="20.80" height="0.70" fill="#e0a0a0" />
<rect x="93.30" y="155.40" width="5.40" height="2.60" fill="#f4f4f4" stroke="#181818" stroke-width="0.9"/>
<rect x="103.30" y="159.20" width="5.00" height="2.40" fill="#505050" />
<rect x="91.60" y="168.50" width="2.00" height="13.60" fill="#ec5858" />
<rect x="113.60" y="168.50" width="2.00" height="13.60" fill="#ec5858" />
<line x1="95.10" y1="170.10" x2="112.10" y2="170.10" stroke="#e02020" stroke-width="1.0" />
<line x1="95.10" y1="180.90" x2="112.10" y2="180.90" stroke="#e02020" stroke-width="1.0" />
<rect x="95.80" y="169.10" width="2.40" height="2.00" fill="#e02020" />
<rect x="109.00" y="169.10" width="2.40" height="2.00" fill="#e02020" />
<rect x="95.80" y="179.90" width="2.40" height="2.00" fill="#e02020" />
<rect x="109.00" y="179.90" width="2.40" height="2.00" fill="#e02020" />
<text x="96.00" y="178.80" font-size="9.4" fill="#181818" textLength="15.40" lengthAdjust="spacingAndGlyphs" stroke="#181818" stroke-width="0.3">VH</text>
<text x="92.00" y="196.40" font-size="7.6" font-weight="bold" fill="#e02020" textLength="4.20" lengthAdjust="spacingAndGlyphs" >(</text>
<text x="112.60" y="196.40" font-size="7.6" font-weight="bold" fill="#e02020" textLength="4.20" lengthAdjust="spacingAndGlyphs" >)</text>
<text x="96.40" y="196.60" font-size="7.8" fill="#202020" textLength="16.00" lengthAdjust="spacingAndGlyphs" stroke="#202020" stroke-width="0.15">VH</text>
<rect x="89.80" y="204.00" width="2.00" height="13.60" fill="#5858ec" />
<rect x="111.80" y="204.00" width="2.00" height="13.60" fill="#5858ec" />
<line x1="93.30" y1="205.60" x2="110.30" y2="205.60" stroke="#2828d8" stroke-width="1.0" />
<line x1="93.30" y1="216.40" x2="110.30" y2="216.40" stroke="#2828d8" stroke-width="1.0" />
<rect x="94.00" y="204.60" width="2.40" height="2.00" fill="#2828d8" />
<rect x="107.20" y="204.60" width="2.40" height="2.00" fill="#2828d8" />
<rect x="94.00" y="215.40" width="2.40" height="2.00" fill="#2828d8" />
<rect x="107.20" y="215.40" width="2.40" height="2.00" fill="#2828d8" />
<text x="94.20" y="214.30" font-size="9.4" fill="#181818" textLength="15.40" lengthAdjust="spacingAndGlyphs" stroke="#181818" stroke-width="0.3">VL</text>
<text x="92.00" y="232.00" font-size="7.6" font-weight="bold" fill="#2828d8" textLength="4.20" lengthAdjust="spacingAndGlyphs" >(</text>
<text x="112.60" y="232.00" font-size="7.6" font-weight="bold" fill="#2828d8" textLength="4.20" lengthAdjust="spacingAndGlyphs" >)</text>
<text x="96.40" y="232.20" font-size="7.8" fill="#202020" textLength="16.00" lengthAdjust="spacingAndGlyphs" stroke="#202020" stroke-width="0.15">VL</text>
<rect x="10.40" y="353.40" width="109.00" height="14.20" fill="url(#dith)" />
<rect x="10.40" y="353.40" width="24.60" height="14.20" fill="#cbcbc3" />
<rect x="10.40" y="353.40" width="23.60" height="1.00" fill="#ffffff" />
<rect x="10.40" y="353.40" width="1.00" height="13.20" fill="#ffffff" />
<rect x="10.40" y="366.60" width="24.60" height="1.00" fill="#3c3c3a" />
<rect x="34.00" y="353.40" width="1.00" height="14.20" fill="#3c3c3a" />
<rect x="11.40" y="365.60" width="22.60" height="1.00" fill="#808078" />
<rect x="33.00" y="354.40" width="1.00" height="12.20" fill="#808078" />
<path d="M25.20,356.90 L25.20,363.50 L19.60,360.20 Z" fill="#000" stroke="none" stroke-width="1" />
<rect x="35.00" y="353.40" width="25.00" height="14.20" fill="#cbcbc3" />
<rect x="35.00" y="353.40" width="24.00" height="1.00" fill="#ffffff" />
<rect x="35.00" y="353.40" width="1.00" height="13.20" fill="#ffffff" />
<rect x="35.00" y="366.60" width="25.00" height="1.00" fill="#3c3c3a" />
<rect x="59.00" y="353.40" width="1.00" height="14.20" fill="#3c3c3a" />
<rect x="36.00" y="365.60" width="23.00" height="1.00" fill="#808078" />
<rect x="58.00" y="354.40" width="1.00" height="12.20" fill="#808078" />
<rect x="95.30" y="353.40" width="23.20" height="14.20" fill="#cbcbc3" />
<rect x="95.30" y="353.40" width="22.20" height="1.00" fill="#ffffff" />
<rect x="95.30" y="353.40" width="1.00" height="13.20" fill="#ffffff" />
<rect x="95.30" y="366.60" width="23.20" height="1.00" fill="#3c3c3a" />
<rect x="117.50" y="353.40" width="1.00" height="14.20" fill="#3c3c3a" />
<rect x="96.30" y="365.60" width="21.20" height="1.00" fill="#808078" />
<rect x="116.50" y="354.40" width="1.00" height="12.20" fill="#808078" />
<path d="M103.80,356.90 L103.80,363.50 L109.40,360.20 Z" fill="#000" stroke="none" stroke-width="1" />
<rect x="8.60" y="367.60" width="111.00" height="1.40" fill="#5a5a56" />
<rect x="137.60" y="76.80" width="2.80" height="276.60" fill="#101010" />
<rect x="140.40" y="76.80" width="17.00" height="273.40" fill="#c0c0b8" />
<rect x="157.40" y="76.80" width="504.00" height="273.40" fill="#c9c9c1" />
<rect x="140.40" y="349.20" width="521.40" height="1.60" fill="#74746e" />
<rect x="140.40" y="350.80" width="521.40" height="1.20" fill="#a0a09a" />
<rect x="137.60" y="351.90" width="524.00" height="1.50" fill="#161616" />
<rect x="156.40" y="76.80" width="1.00" height="175.00" fill="#9a9a92" />
<rect x="157.40" y="76.80" width="1.00" height="175.00" fill="#f4f4f0" />
<rect x="156.40" y="250.80" width="505.00" height="1.00" fill="#9a9a92" />
<rect x="157.40" y="251.80" width="504.00" height="1.00" fill="#f4f4f0" />
<rect x="194.00" y="76.90" width="113.00" height="1.80" fill="#4a4a46" />
<rect x="193.00" y="76.90" width="1.40" height="1.00" fill="#8a8a84" />
<rect x="320.00" y="76.90" width="96.50" height="1.80" fill="#4a4a46" />
<rect x="319.00" y="76.90" width="1.40" height="1.00" fill="#8a8a84" />
<rect x="432.00" y="76.90" width="62.00" height="1.80" fill="#4a4a46" />
<rect x="431.00" y="76.90" width="1.40" height="1.00" fill="#8a8a84" />
<rect x="511.00" y="76.90" width="117.50" height="1.80" fill="#4a4a46" />
<rect x="510.00" y="76.90" width="1.40" height="1.00" fill="#8a8a84" />
<rect x="172.60" y="88.40" width="489.40" height="160.10" fill="#101010" />
<rect x="174.20" y="90.00" width="486.00" height="156.80" fill="#c4c4bc" />
<rect x="174.20" y="90.00" width="37.80" height="13.40" fill="#c6c6be" />
<rect x="174.20" y="90.00" width="37.80" height="1.00" fill="#f0f0ea" />
<rect x="174.20" y="90.00" width="1.20" height="13.40" fill="#f0f0ea" />
<rect x="210.40" y="90.00" width="1.60" height="13.40" fill="#3c3c3a" />
<rect x="212.00" y="90.00" width="67.00" height="13.40" fill="#c6c6be" />
<rect x="212.00" y="90.00" width="67.00" height="1.00" fill="#f0f0ea" />
<rect x="212.00" y="90.00" width="1.20" height="13.40" fill="#f0f0ea" />
<rect x="277.40" y="90.00" width="1.60" height="13.40" fill="#3c3c3a" />
<text x="222.90" y="100.60" font-size="11.2" font-weight="bold" fill="#101010" textLength="48.50" lengthAdjust="spacingAndGlyphs" >Name</text>
<rect x="279.00" y="90.00" width="66.20" height="13.40" fill="#c6c6be" />
<rect x="279.00" y="90.00" width="66.20" height="1.00" fill="#f0f0ea" />
<rect x="279.00" y="90.00" width="1.20" height="13.40" fill="#f0f0ea" />
<rect x="343.60" y="90.00" width="1.60" height="13.40" fill="#3c3c3a" />
<text x="292.30" y="100.60" font-size="11.2" font-weight="bold" fill="#101010" textLength="39.50" lengthAdjust="spacingAndGlyphs" >Text</text>
<rect x="345.20" y="90.00" width="104.50" height="13.40" fill="#c6c6be" />
<rect x="345.20" y="90.00" width="104.50" height="1.00" fill="#f0f0ea" />
<rect x="345.20" y="90.00" width="1.20" height="13.40" fill="#f0f0ea" />
<rect x="448.10" y="90.00" width="1.60" height="13.40" fill="#3c3c3a" />
<text x="363.20" y="100.60" font-size="11.2" font-weight="bold" fill="#101010" textLength="69.80" lengthAdjust="spacingAndGlyphs" >PinType</text>
<rect x="449.70" y="90.00" width="78.70" height="13.40" fill="#c6c6be" />
<rect x="449.70" y="90.00" width="78.70" height="1.00" fill="#f0f0ea" />
<rect x="449.70" y="90.00" width="1.20" height="13.40" fill="#f0f0ea" />
<rect x="526.80" y="90.00" width="1.60" height="13.40" fill="#3c3c3a" />
<text x="465.60" y="100.60" font-size="11.2" font-weight="bold" fill="#101010" textLength="46.90" lengthAdjust="spacingAndGlyphs" >Sized</text>
<rect x="528.40" y="90.00" width="107.80" height="13.40" fill="#c6c6be" />
<rect x="528.40" y="90.00" width="107.80" height="1.00" fill="#f0f0ea" />
<rect x="528.40" y="90.00" width="1.20" height="13.40" fill="#f0f0ea" />
<rect x="634.60" y="90.00" width="1.60" height="13.40" fill="#3c3c3a" />
<text x="548.20" y="100.60" font-size="11.2" font-weight="bold" fill="#101010" textLength="74.70" lengthAdjust="spacingAndGlyphs" >Location</text>
<rect x="174.20" y="103.80" width="462.00" height="1.50" fill="#202020" />
<rect x="183.60" y="92.60" width="21.70" height="8.60" fill="#9c9ca4" />
<path d="M188.6,92.8 L188.6,101 L201.4,96.9 Z" fill="#1010e8" stroke="none" stroke-width="1" />
<rect x="212.00" y="105.60" width="133.20" height="119.88" fill="#ececec" />
<rect x="345.20" y="105.60" width="183.20" height="119.88" fill="#b6b6b4" />
<rect x="528.40" y="105.60" width="87.60" height="119.88" fill="#ececec" />
<rect x="174.20" y="104.30" width="37.80" height="13.32" fill="#c8c8c0" />
<rect x="174.20" y="104.30" width="37.80" height="1.00" fill="#f2f2ee" />
<rect x="174.20" y="116.32" width="37.80" height="1.30" fill="#4a4a46" />
<rect x="210.60" y="104.30" width="1.40" height="13.32" fill="#4a4a46" />
<text x="178.00" y="114.80" font-size="10.2" fill="#101010" textLength="14.80" lengthAdjust="spacingAndGlyphs" >10</text>
<rect x="174.20" y="117.62" width="37.80" height="13.32" fill="#c8c8c0" />
<rect x="174.20" y="117.62" width="37.80" height="1.00" fill="#f2f2ee" />
<rect x="174.20" y="129.64" width="37.80" height="1.30" fill="#4a4a46" />
<rect x="210.60" y="117.62" width="1.40" height="13.32" fill="#4a4a46" />
<text x="178.00" y="128.12" font-size="10.2" fill="#101010" textLength="14.80" lengthAdjust="spacingAndGlyphs" >11</text>
<rect x="174.20" y="130.94" width="37.80" height="13.32" fill="#c8c8c0" />
<rect x="174.20" y="130.94" width="37.80" height="1.00" fill="#f2f2ee" />
<rect x="174.20" y="142.96" width="37.80" height="1.30" fill="#4a4a46" />
<rect x="210.60" y="130.94" width="1.40" height="13.32" fill="#4a4a46" />
<text x="178.00" y="141.44" font-size="10.2" fill="#101010" textLength="14.80" lengthAdjust="spacingAndGlyphs" >12</text>
<rect x="174.20" y="144.26" width="37.80" height="13.32" fill="#c8c8c0" />
<rect x="174.20" y="144.26" width="37.80" height="1.00" fill="#f2f2ee" />
<rect x="174.20" y="156.28" width="37.80" height="1.30" fill="#4a4a46" />
<rect x="210.60" y="144.26" width="1.40" height="13.32" fill="#4a4a46" />
<text x="178.00" y="154.76" font-size="10.2" fill="#101010" textLength="14.80" lengthAdjust="spacingAndGlyphs" >13</text>
<rect x="174.20" y="157.58" width="37.80" height="13.32" fill="#c8c8c0" />
<rect x="174.20" y="157.58" width="37.80" height="1.00" fill="#f2f2ee" />
<rect x="174.20" y="169.60" width="37.80" height="1.30" fill="#4a4a46" />
<rect x="210.60" y="157.58" width="1.40" height="13.32" fill="#4a4a46" />
<text x="178.00" y="168.08" font-size="10.2" fill="#101010" textLength="14.80" lengthAdjust="spacingAndGlyphs" >14</text>
<rect x="174.20" y="170.90" width="37.80" height="13.32" fill="#c8c8c0" />
<rect x="174.20" y="170.90" width="37.80" height="1.00" fill="#f2f2ee" />
<rect x="174.20" y="182.92" width="37.80" height="1.30" fill="#4a4a46" />
<rect x="210.60" y="170.90" width="1.40" height="13.32" fill="#4a4a46" />
<text x="178.00" y="181.40" font-size="10.2" fill="#101010" textLength="14.80" lengthAdjust="spacingAndGlyphs" >15</text>
<rect x="174.20" y="184.22" width="37.80" height="13.32" fill="#c8c8c0" />
<rect x="174.20" y="184.22" width="37.80" height="1.00" fill="#f2f2ee" />
<rect x="174.20" y="196.24" width="37.80" height="1.30" fill="#4a4a46" />
<rect x="210.60" y="184.22" width="1.40" height="13.32" fill="#4a4a46" />
<text x="178.00" y="194.72" font-size="10.2" fill="#101010" textLength="14.80" lengthAdjust="spacingAndGlyphs" >16</text>
<rect x="174.20" y="197.54" width="37.80" height="13.32" fill="#c8c8c0" />
<rect x="174.20" y="197.54" width="37.80" height="1.00" fill="#f2f2ee" />
<rect x="174.20" y="209.56" width="37.80" height="1.30" fill="#4a4a46" />
<rect x="210.60" y="197.54" width="1.40" height="13.32" fill="#4a4a46" />
<text x="178.00" y="208.04" font-size="10.2" fill="#101010" textLength="14.80" lengthAdjust="spacingAndGlyphs" >17</text>
<rect x="174.20" y="210.86" width="37.80" height="13.32" fill="#c8c8c0" />
<rect x="174.20" y="210.86" width="37.80" height="1.00" fill="#f2f2ee" />
<rect x="174.20" y="222.88" width="37.80" height="1.30" fill="#4a4a46" />
<rect x="210.60" y="210.86" width="1.40" height="13.32" fill="#4a4a46" />
<text x="178.00" y="221.36" font-size="10.2" fill="#101010" textLength="14.80" lengthAdjust="spacingAndGlyphs" >18</text>
<rect x="214.40" y="118.92" width="67.00" height="93.24" fill="#0c0c0c" />
<rect x="212.60" y="118.32" width="4.20" height="107.76" fill="#101010" />
<rect x="212.60" y="225.08" width="68.00" height="2.00" fill="#101010" />
<rect x="214.40" y="117.72" width="67.00" height="1.60" fill="#202020" />
<text x="218.20" y="115.70" font-size="10.2" fill="#101010" textLength="45.40" lengthAdjust="spacingAndGlyphs" >D&lt;8&gt;</text>
<text x="284.40" y="115.70" font-size="10.2" fill="#101010" textLength="33.00" lengthAdjust="spacingAndGlyphs" >D[8]</text>
<text x="351.00" y="115.70" font-size="10.2" fill="#181818" textLength="45.20" lengthAdjust="spacingAndGlyphs" >INPUT</text>
<text x="533.40" y="115.70" font-size="10.2" fill="#101010" textLength="28.90" lengthAdjust="spacingAndGlyphs" >Left</text>
<rect x="457.00" y="109.20" width="19.40" height="9.72" fill="#cdcdc5" />
<rect x="457.00" y="109.20" width="19.40" height="1.60" fill="#50504c" />
<rect x="457.00" y="109.20" width="2.40" height="9.72" fill="#50504c" />
<rect x="617.00" y="106.20" width="18.40" height="12.32" fill="#cbcbc3" />
<rect x="617.00" y="106.20" width="18.40" height="1.00" fill="#f4f4f0" />
<rect x="617.00" y="106.20" width="1.20" height="12.32" fill="#f4f4f0" />
<rect x="617.00" y="116.32" width="18.40" height="2.00" fill="#3c3c3a" />
<path d="M621.00,109.40 L631.40,109.40 L626.20,113.00 Z" fill="#000" stroke="none" stroke-width="1" />
<line x1="212.00" y1="118.92" x2="616.00" y2="118.92" stroke="#dededc" stroke-width="1" stroke-dasharray="1.2 1.4" stroke-dashoffset="1.3"/>
<line x1="212.00" y1="118.92" x2="616.00" y2="118.92" stroke="#84847f" stroke-width="1" stroke-dasharray="1.2 1.4"/>
<text x="218.20" y="129.02" font-size="10.2" fill="#ffffff" textLength="45.40" lengthAdjust="spacingAndGlyphs" >Q&lt;1&gt;</text>
<text x="284.40" y="129.02" font-size="10.2" fill="#101010" textLength="33.00" lengthAdjust="spacingAndGlyphs" >Q[1]</text>
<text x="351.00" y="129.02" font-size="10.2" fill="#181818" textLength="17.60" lengthAdjust="spacingAndGlyphs" >TS</text>
<text x="533.40" y="129.02" font-size="10.2" fill="#101010" textLength="38.30" lengthAdjust="spacingAndGlyphs" >Right</text>
<rect x="457.00" y="122.52" width="19.40" height="9.72" fill="#cdcdc5" />
<rect x="457.00" y="122.52" width="19.40" height="1.60" fill="#50504c" />
<rect x="457.00" y="122.52" width="2.40" height="9.72" fill="#50504c" />
<rect x="617.00" y="119.52" width="18.40" height="12.32" fill="#cbcbc3" />
<rect x="617.00" y="119.52" width="18.40" height="1.00" fill="#f4f4f0" />
<rect x="617.00" y="119.52" width="1.20" height="12.32" fill="#f4f4f0" />
<rect x="617.00" y="129.64" width="18.40" height="2.00" fill="#3c3c3a" />
<path d="M621.00,122.72 L631.40,122.72 L626.20,126.32 Z" fill="#000" stroke="none" stroke-width="1" />
<line x1="283.00" y1="132.24" x2="616.00" y2="132.24" stroke="#dededc" stroke-width="1" stroke-dasharray="1.2 1.4" stroke-dashoffset="1.3"/>
<line x1="283.00" y1="132.24" x2="616.00" y2="132.24" stroke="#84847f" stroke-width="1" stroke-dasharray="1.2 1.4"/>
<line x1="217.00" y1="132.24" x2="278.00" y2="132.24" stroke="#8e8e8a" stroke-width="0.8" stroke-dasharray="1.2 1.4"/>
<text x="218.20" y="142.34" font-size="10.2" fill="#ffffff" textLength="45.40" lengthAdjust="spacingAndGlyphs" >Q&lt;2&gt;</text>
<text x="284.40" y="142.34" font-size="10.2" fill="#101010" textLength="33.00" lengthAdjust="spacingAndGlyphs" >Q[2]</text>
<text x="351.00" y="142.34" font-size="10.2" fill="#181818" textLength="17.60" lengthAdjust="spacingAndGlyphs" >TS</text>
<text x="533.40" y="142.34" font-size="10.2" fill="#101010" textLength="38.30" lengthAdjust="spacingAndGlyphs" >Right</text>
<rect x="457.00" y="135.84" width="19.40" height="9.72" fill="#cdcdc5" />
<rect x="457.00" y="135.84" width="19.40" height="1.60" fill="#50504c" />
<rect x="457.00" y="135.84" width="2.40" height="9.72" fill="#50504c" />
<rect x="617.00" y="132.84" width="18.40" height="12.32" fill="#cbcbc3" />
<rect x="617.00" y="132.84" width="18.40" height="1.00" fill="#f4f4f0" />
<rect x="617.00" y="132.84" width="1.20" height="12.32" fill="#f4f4f0" />
<rect x="617.00" y="142.96" width="18.40" height="2.00" fill="#3c3c3a" />
<path d="M621.00,136.04 L631.40,136.04 L626.20,139.64 Z" fill="#000" stroke="none" stroke-width="1" />
<line x1="283.00" y1="145.56" x2="616.00" y2="145.56" stroke="#dededc" stroke-width="1" stroke-dasharray="1.2 1.4" stroke-dashoffset="1.3"/>
<line x1="283.00" y1="145.56" x2="616.00" y2="145.56" stroke="#84847f" stroke-width="1" stroke-dasharray="1.2 1.4"/>
<line x1="217.00" y1="145.56" x2="278.00" y2="145.56" stroke="#8e8e8a" stroke-width="0.8" stroke-dasharray="1.2 1.4"/>
<text x="218.20" y="155.66" font-size="10.2" fill="#ffffff" textLength="45.40" lengthAdjust="spacingAndGlyphs" >Q&lt;3&gt;</text>
<text x="284.40" y="155.66" font-size="10.2" fill="#101010" textLength="33.00" lengthAdjust="spacingAndGlyphs" >Q[3]</text>
<text x="351.00" y="155.66" font-size="10.2" fill="#181818" textLength="17.60" lengthAdjust="spacingAndGlyphs" >TS</text>
<text x="533.40" y="155.66" font-size="10.2" fill="#101010" textLength="38.30" lengthAdjust="spacingAndGlyphs" >Right</text>
<rect x="457.00" y="149.16" width="19.40" height="9.72" fill="#cdcdc5" />
<rect x="457.00" y="149.16" width="19.40" height="1.60" fill="#50504c" />
<rect x="457.00" y="149.16" width="2.40" height="9.72" fill="#50504c" />
<rect x="617.00" y="146.16" width="18.40" height="12.32" fill="#cbcbc3" />
<rect x="617.00" y="146.16" width="18.40" height="1.00" fill="#f4f4f0" />
<rect x="617.00" y="146.16" width="1.20" height="12.32" fill="#f4f4f0" />
<rect x="617.00" y="156.28" width="18.40" height="2.00" fill="#3c3c3a" />
<path d="M621.00,149.36 L631.40,149.36 L626.20,152.96 Z" fill="#000" stroke="none" stroke-width="1" />
<line x1="283.00" y1="158.88" x2="616.00" y2="158.88" stroke="#dededc" stroke-width="1" stroke-dasharray="1.2 1.4" stroke-dashoffset="1.3"/>
<line x1="283.00" y1="158.88" x2="616.00" y2="158.88" stroke="#84847f" stroke-width="1" stroke-dasharray="1.2 1.4"/>
<line x1="217.00" y1="158.88" x2="278.00" y2="158.88" stroke="#8e8e8a" stroke-width="0.8" stroke-dasharray="1.2 1.4"/>
<text x="218.20" y="168.98" font-size="10.2" fill="#ffffff" textLength="45.40" lengthAdjust="spacingAndGlyphs" >Q&lt;4&gt;</text>
<text x="284.40" y="168.98" font-size="10.2" fill="#101010" textLength="33.00" lengthAdjust="spacingAndGlyphs" >Q[4]</text>
<text x="351.00" y="168.98" font-size="10.2" fill="#181818" textLength="17.60" lengthAdjust="spacingAndGlyphs" >TS</text>
<text x="533.40" y="168.98" font-size="10.2" fill="#101010" textLength="38.30" lengthAdjust="spacingAndGlyphs" >Right</text>
<rect x="457.00" y="162.48" width="19.40" height="9.72" fill="#cdcdc5" />
<rect x="457.00" y="162.48" width="19.40" height="1.60" fill="#50504c" />
<rect x="457.00" y="162.48" width="2.40" height="9.72" fill="#50504c" />
<rect x="617.00" y="159.48" width="18.40" height="12.32" fill="#cbcbc3" />
<rect x="617.00" y="159.48" width="18.40" height="1.00" fill="#f4f4f0" />
<rect x="617.00" y="159.48" width="1.20" height="12.32" fill="#f4f4f0" />
<rect x="617.00" y="169.60" width="18.40" height="2.00" fill="#3c3c3a" />
<path d="M621.00,162.68 L631.40,162.68 L626.20,166.28 Z" fill="#000" stroke="none" stroke-width="1" />
<line x1="283.00" y1="172.20" x2="616.00" y2="172.20" stroke="#dededc" stroke-width="1" stroke-dasharray="1.2 1.4" stroke-dashoffset="1.3"/>
<line x1="283.00" y1="172.20" x2="616.00" y2="172.20" stroke="#84847f" stroke-width="1" stroke-dasharray="1.2 1.4"/>
<line x1="217.00" y1="172.20" x2="278.00" y2="172.20" stroke="#8e8e8a" stroke-width="0.8" stroke-dasharray="1.2 1.4"/>
<text x="218.20" y="182.30" font-size="10.2" fill="#ffffff" textLength="45.40" lengthAdjust="spacingAndGlyphs" >Q&lt;5&gt;</text>
<text x="284.40" y="182.30" font-size="10.2" fill="#101010" textLength="33.00" lengthAdjust="spacingAndGlyphs" >Q[5]</text>
<text x="351.00" y="182.30" font-size="10.2" fill="#181818" textLength="17.60" lengthAdjust="spacingAndGlyphs" >TS</text>
<text x="533.40" y="182.30" font-size="10.2" fill="#101010" textLength="38.30" lengthAdjust="spacingAndGlyphs" >Right</text>
<rect x="457.00" y="175.80" width="19.40" height="9.72" fill="#cdcdc5" />
<rect x="457.00" y="175.80" width="19.40" height="1.60" fill="#50504c" />
<rect x="457.00" y="175.80" width="2.40" height="9.72" fill="#50504c" />
<rect x="617.00" y="172.80" width="18.40" height="12.32" fill="#cbcbc3" />
<rect x="617.00" y="172.80" width="18.40" height="1.00" fill="#f4f4f0" />
<rect x="617.00" y="172.80" width="1.20" height="12.32" fill="#f4f4f0" />
<rect x="617.00" y="182.92" width="18.40" height="2.00" fill="#3c3c3a" />
<path d="M621.00,176.00 L631.40,176.00 L626.20,179.60 Z" fill="#000" stroke="none" stroke-width="1" />
<line x1="283.00" y1="185.52" x2="616.00" y2="185.52" stroke="#dededc" stroke-width="1" stroke-dasharray="1.2 1.4" stroke-dashoffset="1.3"/>
<line x1="283.00" y1="185.52" x2="616.00" y2="185.52" stroke="#84847f" stroke-width="1" stroke-dasharray="1.2 1.4"/>
<line x1="217.00" y1="185.52" x2="278.00" y2="185.52" stroke="#8e8e8a" stroke-width="0.8" stroke-dasharray="1.2 1.4"/>
<text x="218.20" y="195.62" font-size="10.2" fill="#ffffff" textLength="45.40" lengthAdjust="spacingAndGlyphs" >Q&lt;6&gt;</text>
<text x="284.40" y="195.62" font-size="10.2" fill="#101010" textLength="33.00" lengthAdjust="spacingAndGlyphs" >Q[6]</text>
<text x="351.00" y="195.62" font-size="10.2" fill="#181818" textLength="17.60" lengthAdjust="spacingAndGlyphs" >TS</text>
<text x="533.40" y="195.62" font-size="10.2" fill="#101010" textLength="38.30" lengthAdjust="spacingAndGlyphs" >Right</text>
<rect x="457.00" y="189.12" width="19.40" height="9.72" fill="#cdcdc5" />
<rect x="457.00" y="189.12" width="19.40" height="1.60" fill="#50504c" />
<rect x="457.00" y="189.12" width="2.40" height="9.72" fill="#50504c" />
<rect x="617.00" y="186.12" width="18.40" height="12.32" fill="#cbcbc3" />
<rect x="617.00" y="186.12" width="18.40" height="1.00" fill="#f4f4f0" />
<rect x="617.00" y="186.12" width="1.20" height="12.32" fill="#f4f4f0" />
<rect x="617.00" y="196.24" width="18.40" height="2.00" fill="#3c3c3a" />
<path d="M621.00,189.32 L631.40,189.32 L626.20,192.92 Z" fill="#000" stroke="none" stroke-width="1" />
<line x1="283.00" y1="198.84" x2="616.00" y2="198.84" stroke="#dededc" stroke-width="1" stroke-dasharray="1.2 1.4" stroke-dashoffset="1.3"/>
<line x1="283.00" y1="198.84" x2="616.00" y2="198.84" stroke="#84847f" stroke-width="1" stroke-dasharray="1.2 1.4"/>
<line x1="217.00" y1="198.84" x2="278.00" y2="198.84" stroke="#8e8e8a" stroke-width="0.8" stroke-dasharray="1.2 1.4"/>
<text x="218.20" y="208.94" font-size="10.2" fill="#ffffff" textLength="45.40" lengthAdjust="spacingAndGlyphs" >Q&lt;7&gt;</text>
<text x="284.40" y="208.94" font-size="10.2" fill="#101010" textLength="33.00" lengthAdjust="spacingAndGlyphs" >Q[7]</text>
<text x="351.00" y="208.94" font-size="10.2" fill="#181818" textLength="17.60" lengthAdjust="spacingAndGlyphs" >TS</text>
<text x="533.40" y="208.94" font-size="10.2" fill="#101010" textLength="38.30" lengthAdjust="spacingAndGlyphs" >Right</text>
<rect x="457.00" y="202.44" width="19.40" height="9.72" fill="#cdcdc5" />
<rect x="457.00" y="202.44" width="19.40" height="1.60" fill="#50504c" />
<rect x="457.00" y="202.44" width="2.40" height="9.72" fill="#50504c" />
<rect x="617.00" y="199.44" width="18.40" height="12.32" fill="#cbcbc3" />
<rect x="617.00" y="199.44" width="18.40" height="1.00" fill="#f4f4f0" />
<rect x="617.00" y="199.44" width="1.20" height="12.32" fill="#f4f4f0" />
<rect x="617.00" y="209.56" width="18.40" height="2.00" fill="#3c3c3a" />
<path d="M621.00,202.64 L631.40,202.64 L626.20,206.24 Z" fill="#000" stroke="none" stroke-width="1" />
<line x1="212.00" y1="212.16" x2="616.00" y2="212.16" stroke="#dededc" stroke-width="1" stroke-dasharray="1.2 1.4" stroke-dashoffset="1.3"/>
<line x1="212.00" y1="212.16" x2="616.00" y2="212.16" stroke="#84847f" stroke-width="1" stroke-dasharray="1.2 1.4"/>
<text x="218.20" y="222.26" font-size="10.2" fill="#101010" textLength="45.40" lengthAdjust="spacingAndGlyphs" >Q&lt;8&gt;</text>
<text x="284.40" y="222.26" font-size="10.2" fill="#101010" textLength="33.00" lengthAdjust="spacingAndGlyphs" >Q[8]</text>
<text x="351.00" y="222.26" font-size="10.2" fill="#181818" textLength="17.60" lengthAdjust="spacingAndGlyphs" >TS</text>
<text x="533.40" y="222.26" font-size="10.2" fill="#101010" textLength="38.30" lengthAdjust="spacingAndGlyphs" >Right</text>
<rect x="457.00" y="215.76" width="19.40" height="9.72" fill="#cdcdc5" />
<rect x="457.00" y="215.76" width="19.40" height="1.60" fill="#50504c" />
<rect x="457.00" y="215.76" width="2.40" height="9.72" fill="#50504c" />
<rect x="617.00" y="212.76" width="18.40" height="12.32" fill="#cbcbc3" />
<rect x="617.00" y="212.76" width="18.40" height="1.00" fill="#f4f4f0" />
<rect x="617.00" y="212.76" width="1.20" height="12.32" fill="#f4f4f0" />
<rect x="617.00" y="222.88" width="18.40" height="2.00" fill="#3c3c3a" />
<path d="M621.00,215.96 L631.40,215.96 L626.20,219.56 Z" fill="#000" stroke="none" stroke-width="1" />
<line x1="279.40" y1="105.60" x2="279.40" y2="225.48" stroke="#dededc" stroke-width="1.2" stroke-dasharray="1.2 1.4" stroke-dashoffset="1.3"/>
<line x1="279.40" y1="105.60" x2="279.40" y2="225.48" stroke="#84847f" stroke-width="1.2" stroke-dasharray="1.2 1.4"/>
<line x1="345.20" y1="105.60" x2="345.20" y2="225.48" stroke="#dededc" stroke-width="1.2" stroke-dasharray="1.2 1.4" stroke-dashoffset="1.3"/>
<line x1="345.20" y1="105.60" x2="345.20" y2="225.48" stroke="#84847f" stroke-width="1.2" stroke-dasharray="1.2 1.4"/>
<line x1="449.70" y1="105.60" x2="449.70" y2="225.48" stroke="#dededc" stroke-width="1.2" stroke-dasharray="1.2 1.4" stroke-dashoffset="1.3"/>
<line x1="449.70" y1="105.60" x2="449.70" y2="225.48" stroke="#84847f" stroke-width="1.2" stroke-dasharray="1.2 1.4"/>
<line x1="528.40" y1="105.60" x2="528.40" y2="225.48" stroke="#dededc" stroke-width="1.2" stroke-dasharray="1.2 1.4" stroke-dashoffset="1.3"/>
<line x1="528.40" y1="105.60" x2="528.40" y2="225.48" stroke="#84847f" stroke-width="1.2" stroke-dasharray="1.2 1.4"/>
<line x1="212.00" y1="105.90" x2="616.00" y2="105.90" stroke="#84847f" stroke-width="1" stroke-dasharray="1.2 1.4"/>
<line x1="212.00" y1="225.48" x2="636.00" y2="225.48" stroke="#6c6c68" stroke-width="1" />
<rect x="278.20" y="118.92" width="4.60" height="106.56" fill="#2a2818" />
<line x1="280.50" y1="118.92" x2="280.50" y2="225.48" stroke="#d8c880" stroke-width="2.2" stroke-dasharray="1 1.2"/>
<rect x="278.60" y="225.48" width="5.40" height="3.20" fill="#585850" />
<rect x="636.20" y="90.00" width="24.20" height="142.00" fill="url(#dith)" />
<rect x="636.20" y="90.40" width="24.20" height="12.20" fill="#cbcbc3" />
<rect x="636.20" y="90.40" width="23.20" height="1.00" fill="#ffffff" />
<rect x="636.20" y="90.40" width="1.00" height="11.20" fill="#ffffff" />
<rect x="636.20" y="101.60" width="24.20" height="1.00" fill="#3c3c3a" />
<rect x="659.40" y="90.40" width="1.00" height="12.20" fill="#3c3c3a" />
<rect x="637.20" y="100.60" width="22.20" height="1.00" fill="#808078" />
<rect x="658.40" y="91.40" width="1.00" height="10.20" fill="#808078" />
<path d="M642.75,98.00 L653.25,98.00 L648.00,94.40 Z" fill="#000" stroke="none" stroke-width="1" />
<rect x="636.20" y="161.00" width="24.20" height="56.60" fill="#cbcbc3" />
<rect x="636.20" y="161.00" width="23.20" height="1.00" fill="#ffffff" />
<rect x="636.20" y="161.00" width="1.00" height="55.60" fill="#ffffff" />
<rect x="636.20" y="216.60" width="24.20" height="1.00" fill="#3c3c3a" />
<rect x="659.40" y="161.00" width="1.00" height="56.60" fill="#3c3c3a" />
<rect x="637.20" y="215.60" width="22.20" height="1.00" fill="#808078" />
<rect x="658.40" y="162.00" width="1.00" height="54.60" fill="#808078" />
<rect x="636.20" y="218.80" width="24.20" height="12.60" fill="#cbcbc3" />
<rect x="636.20" y="218.80" width="23.20" height="1.00" fill="#ffffff" />
<rect x="636.20" y="218.80" width="1.00" height="11.60" fill="#ffffff" />
<rect x="636.20" y="230.40" width="24.20" height="1.00" fill="#3c3c3a" />
<rect x="659.40" y="218.80" width="1.00" height="12.60" fill="#3c3c3a" />
<rect x="637.20" y="229.40" width="22.20" height="1.00" fill="#808078" />
<rect x="658.40" y="219.80" width="1.00" height="10.60" fill="#808078" />
<path d="M642.75,223.00 L653.25,223.00 L648.00,226.60 Z" fill="#000" stroke="none" stroke-width="1" />
<rect x="174.20" y="233.20" width="462.00" height="13.40" fill="url(#dith)" />
<rect x="175.00" y="233.20" width="23.60" height="13.40" fill="#cbcbc3" />
<rect x="175.00" y="233.20" width="22.60" height="1.00" fill="#ffffff" />
<rect x="175.00" y="233.20" width="1.00" height="12.40" fill="#ffffff" />
<rect x="175.00" y="245.60" width="23.60" height="1.00" fill="#3c3c3a" />
<rect x="197.60" y="233.20" width="1.00" height="13.40" fill="#3c3c3a" />
<rect x="176.00" y="244.60" width="21.60" height="1.00" fill="#808078" />
<rect x="196.60" y="234.20" width="1.00" height="11.40" fill="#808078" />
<path d="M189.30,236.30 L189.30,242.90 L183.70,239.60 Z" fill="#000" stroke="none" stroke-width="1" />
<rect x="200.60" y="233.20" width="244.80" height="13.40" fill="#cbcbc3" />
<rect x="200.60" y="233.20" width="243.80" height="1.00" fill="#ffffff" />
<rect x="200.60" y="233.20" width="1.00" height="12.40" fill="#ffffff" />
<rect x="200.60" y="245.60" width="244.80" height="1.00" fill="#3c3c3a" />
<rect x="444.40" y="233.20" width="1.00" height="13.40" fill="#3c3c3a" />
<rect x="201.60" y="244.60" width="242.80" height="1.00" fill="#808078" />
<rect x="443.40" y="234.20" width="1.00" height="11.40" fill="#808078" />
<rect x="611.80" y="233.20" width="23.20" height="13.40" fill="#cbcbc3" />
<rect x="611.80" y="233.20" width="22.20" height="1.00" fill="#ffffff" />
<rect x="611.80" y="233.20" width="1.00" height="12.40" fill="#ffffff" />
<rect x="611.80" y="245.60" width="23.20" height="1.00" fill="#3c3c3a" />
<rect x="634.00" y="233.20" width="1.00" height="13.40" fill="#3c3c3a" />
<rect x="612.80" y="244.60" width="21.20" height="1.00" fill="#808078" />
<rect x="633.00" y="234.20" width="1.00" height="11.40" fill="#808078" />
<path d="M620.30,236.30 L620.30,242.90 L625.90,239.60 Z" fill="#000" stroke="none" stroke-width="1" />
<rect x="636.20" y="232.40" width="24.20" height="14.40" fill="#c9c9c1" />
<rect x="157.40" y="269.30" width="10.40" height="1.00" fill="#8c8c84" />
<rect x="158.40" y="270.30" width="9.40" height="1.00" fill="#fafaf6" />
<rect x="330.00" y="269.30" width="45.60" height="1.00" fill="#8c8c84" />
<rect x="330.00" y="270.30" width="44.60" height="1.00" fill="#fafaf6" />
<rect x="157.40" y="269.30" width="1.00" height="80.90" fill="#8c8c84" />
<rect x="158.40" y="270.30" width="1.00" height="79.90" fill="#fafaf6" />
<rect x="375.60" y="269.30" width="1.00" height="80.90" fill="#8c8c84" />
<rect x="376.60" y="269.30" width="1.00" height="80.90" fill="#fafaf6" />
<text x="171.80" y="273.20" font-size="12.2" font-weight="bold" fill="#101010" textLength="154.20" lengthAdjust="spacingAndGlyphs" >Symbol Outline</text>
<text x="173.30" y="298.90" font-size="11.4" fill="#101010" textLength="27.70" lengthAdjust="spacingAndGlyphs" >Left</text>
<line x1="185.00" y1="300.50" x2="191.20" y2="300.50" stroke="#101010" stroke-width="1" />
<text x="264.30" y="298.90" font-size="11.4" fill="#101010" textLength="29.70" lengthAdjust="spacingAndGlyphs" >Top</text>
<line x1="264.30" y1="300.50" x2="273.40" y2="300.50" stroke="#101010" stroke-width="1" />
<text x="173.30" y="335.20" font-size="11.4" fill="#101010" textLength="38.40" lengthAdjust="spacingAndGlyphs" >Right</text>
<line x1="184.80" y1="336.80" x2="188.00" y2="336.80" stroke="#101010" stroke-width="1" />
<text x="264.30" y="335.20" font-size="11.4" fill="#101010" textLength="51.80" lengthAdjust="spacingAndGlyphs" >Bottom</text>
<line x1="264.30" y1="336.80" x2="273.40" y2="336.80" stroke="#101010" stroke-width="1" />
<rect x="220.20" y="288.60" width="38.20" height="18.20" fill="#e6e6e4" />
<rect x="220.20" y="288.60" width="38.20" height="1.30" fill="#808078" />
<rect x="220.20" y="288.60" width="1.30" height="18.20" fill="#808078" />
<rect x="221.50" y="289.90" width="35.60" height="1.30" fill="#3c3c3a" />
<rect x="221.50" y="289.90" width="1.30" height="15.60" fill="#3c3c3a" />
<rect x="220.20" y="305.50" width="38.20" height="1.30" fill="#ffffff" />
<rect x="257.10" y="288.60" width="1.30" height="18.20" fill="#ffffff" />
<text x="225.60" y="301.00" font-size="10.6" fill="#101010" textLength="13.00" lengthAdjust="spacingAndGlyphs" >-5</text>
<rect x="322.70" y="288.60" width="38.20" height="18.20" fill="#e6e6e4" />
<rect x="322.70" y="288.60" width="38.20" height="1.30" fill="#808078" />
<rect x="322.70" y="288.60" width="1.30" height="18.20" fill="#808078" />
<rect x="324.00" y="289.90" width="35.60" height="1.30" fill="#3c3c3a" />
<rect x="324.00" y="289.90" width="1.30" height="15.60" fill="#3c3c3a" />
<rect x="322.70" y="305.50" width="38.20" height="1.30" fill="#ffffff" />
<rect x="359.60" y="288.60" width="1.30" height="18.20" fill="#ffffff" />
<text x="328.10" y="301.00" font-size="10.6" fill="#101010" textLength="9.00" lengthAdjust="spacingAndGlyphs" >5</text>
<rect x="220.20" y="325.20" width="38.20" height="18.20" fill="#e6e6e4" />
<rect x="220.20" y="325.20" width="38.20" height="1.30" fill="#808078" />
<rect x="220.20" y="325.20" width="1.30" height="18.20" fill="#808078" />
<rect x="221.50" y="326.50" width="35.60" height="1.30" fill="#3c3c3a" />
<rect x="221.50" y="326.50" width="1.30" height="15.60" fill="#3c3c3a" />
<rect x="220.20" y="342.10" width="38.20" height="1.30" fill="#ffffff" />
<rect x="257.10" y="325.20" width="1.30" height="18.20" fill="#ffffff" />
<text x="225.60" y="337.60" font-size="10.6" fill="#101010" textLength="9.40" lengthAdjust="spacingAndGlyphs" >5</text>
<rect x="322.70" y="325.20" width="38.20" height="18.20" fill="#e6e6e4" />
<rect x="322.70" y="325.20" width="38.20" height="1.30" fill="#808078" />
<rect x="322.70" y="325.20" width="1.30" height="18.20" fill="#808078" />
<rect x="324.00" y="326.50" width="35.60" height="1.30" fill="#3c3c3a" />
<rect x="324.00" y="326.50" width="1.30" height="15.60" fill="#3c3c3a" />
<rect x="322.70" y="342.10" width="38.20" height="1.30" fill="#ffffff" />
<rect x="359.60" y="325.20" width="1.30" height="18.20" fill="#ffffff" />
<text x="328.10" y="337.60" font-size="10.6" fill="#101010" textLength="13.40" lengthAdjust="spacingAndGlyphs" >-5</text>
<rect x="394.20" y="269.30" width="11.10" height="1.00" fill="#8c8c84" />
<rect x="395.20" y="270.30" width="10.10" height="1.00" fill="#fafaf6" />
<rect x="519.50" y="269.30" width="45.80" height="1.00" fill="#8c8c84" />
<rect x="519.50" y="270.30" width="44.80" height="1.00" fill="#fafaf6" />
<rect x="394.20" y="269.30" width="1.00" height="80.90" fill="#8c8c84" />
<rect x="395.20" y="270.30" width="1.00" height="79.90" fill="#fafaf6" />
<rect x="565.30" y="269.30" width="1.00" height="80.90" fill="#8c8c84" />
<rect x="566.30" y="269.30" width="1.00" height="80.90" fill="#fafaf6" />
<text x="409.30" y="273.20" font-size="12.2" font-weight="bold" fill="#101010" textLength="106.20" lengthAdjust="spacingAndGlyphs" >Move Pins</text>
<rect x="460.10" y="279.70" width="44.10" height="18.40" fill="#cbcbc3" />
<rect x="460.10" y="279.70" width="42.90" height="1.20" fill="#ffffff" />
<rect x="460.10" y="279.70" width="1.20" height="17.20" fill="#ffffff" />
<rect x="460.10" y="296.90" width="44.10" height="1.20" fill="#3c3c3a" />
<rect x="503.00" y="279.70" width="1.20" height="18.40" fill="#3c3c3a" />
<rect x="461.30" y="295.70" width="41.70" height="1.20" fill="#808078" />
<rect x="501.80" y="280.90" width="1.20" height="16.00" fill="#808078" />
<path d="M472.70,292.20 L495.70,292.20 L484.20,286.60 Z" fill="#000" stroke="none" stroke-width="1" />
<rect x="409.30" y="303.00" width="43.50" height="18.30" fill="#cbcbc3" />
<rect x="409.30" y="303.00" width="42.30" height="1.20" fill="#ffffff" />
<rect x="409.30" y="303.00" width="1.20" height="17.10" fill="#ffffff" />
<rect x="409.30" y="320.10" width="43.50" height="1.20" fill="#3c3c3a" />
<rect x="451.60" y="303.00" width="1.20" height="18.30" fill="#3c3c3a" />
<rect x="410.50" y="318.90" width="41.10" height="1.20" fill="#808078" />
<rect x="450.40" y="304.20" width="1.20" height="15.90" fill="#808078" />
<path d="M437.40,307.30 L437.40,317.90 L425.00,312.60 Z" fill="#000" stroke="none" stroke-width="1" />
<rect x="453.60" y="303.00" width="55.00" height="18.30" fill="#cbcbc3" />
<rect x="453.60" y="303.00" width="53.80" height="1.20" fill="#ffffff" />
<rect x="453.60" y="303.00" width="1.20" height="17.10" fill="#ffffff" />
<rect x="453.60" y="320.10" width="55.00" height="1.20" fill="#3c3c3a" />
<rect x="507.40" y="303.00" width="1.20" height="18.30" fill="#3c3c3a" />
<rect x="454.80" y="318.90" width="52.60" height="1.20" fill="#808078" />
<rect x="506.20" y="304.20" width="1.20" height="15.90" fill="#808078" />
<text x="460.70" y="315.40" font-size="11.2" fill="#181818" textLength="41.90" lengthAdjust="spacingAndGlyphs" >Move</text>
<line x1="460.70" y1="317.00" x2="473.60" y2="317.00" stroke="#181818" stroke-width="1" />
<rect x="509.00" y="303.00" width="44.00" height="18.30" fill="#cbcbc3" />
<rect x="509.00" y="303.00" width="42.80" height="1.20" fill="#ffffff" />
<rect x="509.00" y="303.00" width="1.20" height="17.10" fill="#ffffff" />
<rect x="509.00" y="320.10" width="44.00" height="1.20" fill="#3c3c3a" />
<rect x="551.80" y="303.00" width="1.20" height="18.30" fill="#3c3c3a" />
<rect x="510.20" y="318.90" width="41.60" height="1.20" fill="#808078" />
<rect x="550.60" y="304.20" width="1.20" height="15.90" fill="#808078" />
<path d="M524.80,307.30 L524.80,317.90 L536.40,312.60 Z" fill="#000" stroke="none" stroke-width="1" />
<rect x="459.60" y="326.00" width="44.80" height="19.20" fill="#101010" />
<rect x="461.20" y="327.40" width="41.60" height="16.40" fill="#cbcbc3" />
<rect x="461.20" y="327.40" width="40.40" height="1.20" fill="#ffffff" />
<rect x="461.20" y="327.40" width="1.20" height="15.20" fill="#ffffff" />
<rect x="461.20" y="342.60" width="41.60" height="1.20" fill="#3c3c3a" />
<rect x="501.60" y="327.40" width="1.20" height="16.40" fill="#3c3c3a" />
<rect x="462.40" y="341.40" width="39.20" height="1.20" fill="#808078" />
<rect x="500.40" y="328.60" width="1.20" height="14.00" fill="#808078" />
<rect x="466.00" y="330.20" width="32.80" height="11.80" fill="none" stroke="#202020" stroke-width="1.1" stroke-dasharray="1.3 1.3"/>
<path d="M472.20,332.60 L492.60,332.60 L482.40,338.60 Z" fill="#000" stroke="none" stroke-width="1" />
<path d="M478.3,334 L478.3,348.6 L481.9,345.8 L486.6,352.2 L490.4,350.6 L486.0,344.4 L491.8,343.8 Z" fill="#e6e6e6" stroke="#303030" stroke-width="1.1" stroke-linejoin="round"/>
<g clip-path="url(#clipMid)">
<rect x="583.30" y="287.60" width="90.00" height="17.80" fill="#cbcbc3" />
<rect x="583.30" y="287.60" width="88.80" height="1.20" fill="#ffffff" />
<rect x="583.30" y="287.60" width="1.20" height="16.60" fill="#ffffff" />
<rect x="583.30" y="304.20" width="90.00" height="1.20" fill="#3c3c3a" />
<rect x="672.10" y="287.60" width="1.20" height="17.80" fill="#3c3c3a" />
<rect x="584.50" y="303.00" width="87.60" height="1.20" fill="#808078" />
<rect x="670.90" y="288.80" width="1.20" height="15.40" fill="#808078" />
<text x="607.20" y="299.80" font-size="11.2" fill="#101010" textLength="56.00" lengthAdjust="spacingAndGlyphs" >Undo A</text>
<line x1="607.20" y1="301.40" x2="617.60" y2="301.40" stroke="#101010" stroke-width="1" />
<rect x="583.30" y="324.60" width="90.00" height="18.00" fill="#cbcbc3" />
<rect x="583.30" y="324.60" width="88.80" height="1.20" fill="#ffffff" />
<rect x="583.30" y="324.60" width="1.20" height="16.80" fill="#ffffff" />
<rect x="583.30" y="341.40" width="90.00" height="1.20" fill="#3c3c3a" />
<rect x="672.10" y="324.60" width="1.20" height="18.00" fill="#3c3c3a" />
<rect x="584.50" y="340.20" width="87.60" height="1.20" fill="#808078" />
<rect x="670.90" y="325.80" width="1.20" height="15.60" fill="#808078" />
<text x="621.00" y="337.20" font-size="11.2" fill="#101010" textLength="35.00" lengthAdjust="spacingAndGlyphs" >Help</text>
<line x1="621.00" y1="338.80" x2="630.60" y2="338.80" stroke="#101010" stroke-width="1" />
</g>
<rect x="661.80" y="76.80" width="1.60" height="276.60" fill="#c9c9c1" />
<rect x="663.40" y="76.80" width="24.20" height="276.60" fill="url(#dith)" />
<rect x="663.40" y="77.20" width="24.20" height="13.60" fill="#cbcbc3" />
<rect x="663.40" y="77.20" width="23.20" height="1.00" fill="#ffffff" />
<rect x="663.40" y="77.20" width="1.00" height="12.60" fill="#ffffff" />
<rect x="663.40" y="89.80" width="24.20" height="1.00" fill="#3c3c3a" />
<rect x="686.60" y="77.20" width="1.00" height="13.60" fill="#3c3c3a" />
<rect x="664.40" y="88.80" width="22.20" height="1.00" fill="#808078" />
<rect x="685.60" y="78.20" width="1.00" height="11.60" fill="#808078" />
<path d="M669.95,85.50 L680.45,85.50 L675.20,81.90 Z" fill="#000" stroke="none" stroke-width="1" />
<rect x="663.40" y="155.30" width="24.20" height="184.60" fill="#cbcbc3" />
<rect x="663.40" y="155.30" width="23.20" height="1.00" fill="#ffffff" />
<rect x="663.40" y="155.30" width="1.00" height="183.60" fill="#ffffff" />
<rect x="663.40" y="338.90" width="24.20" height="1.00" fill="#3c3c3a" />
<rect x="686.60" y="155.30" width="1.00" height="184.60" fill="#3c3c3a" />
<rect x="664.40" y="337.90" width="22.20" height="1.00" fill="#808078" />
<rect x="685.60" y="156.30" width="1.00" height="182.60" fill="#808078" />
<rect x="663.40" y="339.90" width="24.20" height="12.60" fill="#cbcbc3" />
<rect x="663.40" y="339.90" width="23.20" height="1.00" fill="#ffffff" />
<rect x="663.40" y="339.90" width="1.00" height="11.60" fill="#ffffff" />
<rect x="663.40" y="351.50" width="24.20" height="1.00" fill="#3c3c3a" />
<rect x="686.60" y="339.90" width="1.00" height="12.60" fill="#3c3c3a" />
<rect x="664.40" y="350.50" width="22.20" height="1.00" fill="#808078" />
<rect x="685.60" y="340.90" width="1.00" height="10.60" fill="#808078" />
<path d="M669.95,344.10 L680.45,344.10 L675.20,347.70 Z" fill="#000" stroke="none" stroke-width="1" />
<rect x="129.60" y="353.60" width="532.00" height="14.00" fill="url(#dith)" />
<rect x="129.60" y="353.60" width="23.60" height="14.00" fill="#cbcbc3" />
<rect x="129.60" y="353.60" width="22.60" height="1.00" fill="#ffffff" />
<rect x="129.60" y="353.60" width="1.00" height="13.00" fill="#ffffff" />
<rect x="129.60" y="366.60" width="23.60" height="1.00" fill="#3c3c3a" />
<rect x="152.20" y="353.60" width="1.00" height="14.00" fill="#3c3c3a" />
<rect x="130.60" y="365.60" width="21.60" height="1.00" fill="#808078" />
<rect x="151.20" y="354.60" width="1.00" height="12.00" fill="#808078" />
<path d="M143.90,357.00 L143.90,363.60 L138.30,360.30 Z" fill="#000" stroke="none" stroke-width="1" />
<rect x="154.70" y="353.60" width="463.00" height="14.00" fill="#cbcbc3" />
<rect x="154.70" y="353.60" width="462.00" height="1.00" fill="#ffffff" />
<rect x="154.70" y="353.60" width="1.00" height="13.00" fill="#ffffff" />
<rect x="154.70" y="366.60" width="463.00" height="1.00" fill="#3c3c3a" />
<rect x="616.70" y="353.60" width="1.00" height="14.00" fill="#3c3c3a" />
<rect x="155.70" y="365.60" width="461.00" height="1.00" fill="#808078" />
<rect x="615.70" y="354.60" width="1.00" height="12.00" fill="#808078" />
<rect x="637.70" y="353.60" width="23.60" height="14.00" fill="#cbcbc3" />
<rect x="637.70" y="353.60" width="22.60" height="1.00" fill="#ffffff" />
<rect x="637.70" y="353.60" width="1.00" height="13.00" fill="#ffffff" />
<rect x="637.70" y="366.60" width="23.60" height="1.00" fill="#3c3c3a" />
<rect x="660.30" y="353.60" width="1.00" height="14.00" fill="#3c3c3a" />
<rect x="638.70" y="365.60" width="21.60" height="1.00" fill="#808078" />
<rect x="659.30" y="354.60" width="1.00" height="12.00" fill="#808078" />
<path d="M646.40,357.00 L646.40,363.60 L652.00,360.30 Z" fill="#000" stroke="none" stroke-width="1" />
<rect x="661.30" y="353.60" width="26.40" height="14.00" fill="#c9c9c1" />
<rect x="127.20" y="367.60" width="560.60" height="1.40" fill="#5a5a56" />
<rect x="687.60" y="76.80" width="2.80" height="291.00" fill="#d6d6d0" />
<rect x="690.40" y="76.80" width="5.00" height="291.00" fill="#f0f0ec" />
<rect x="695.40" y="76.80" width="1.20" height="291.00" fill="#a0a09a" />
<rect x="696.60" y="76.80" width="1.60" height="291.00" fill="#505050" />
<rect x="698.00" y="76.80" width="529.50" height="277.00" fill="#101010" />
<clipPath id="clipGrid"><rect x="698.0" y="76.8" width="529.5" height="277.0"/></clipPath>
<g clip-path="url(#clipGrid)">
<line x1="690.06" y1="80.60" x2="1227.50" y2="80.60" stroke="#7a7a7a" stroke-width="0.95" stroke-dasharray="4.6 5.240"/>
<line x1="690.06" y1="91.75" x2="1227.50" y2="91.75" stroke="#7a7a7a" stroke-width="0.95" stroke-dasharray="4.6 5.240"/>
<line x1="690.06" y1="102.91" x2="1227.50" y2="102.91" stroke="#7a7a7a" stroke-width="0.95" stroke-dasharray="4.6 5.240"/>
<line x1="690.06" y1="114.06" x2="1227.50" y2="114.06" stroke="#7a7a7a" stroke-width="0.95" stroke-dasharray="4.6 5.240"/>
<line x1="690.06" y1="125.22" x2="1227.50" y2="125.22" stroke="#7a7a7a" stroke-width="0.95" stroke-dasharray="4.6 5.240"/>
<line x1="690.06" y1="136.38" x2="1227.50" y2="136.38" stroke="#7a7a7a" stroke-width="0.95" stroke-dasharray="4.6 5.240"/>
<line x1="690.06" y1="147.53" x2="1227.50" y2="147.53" stroke="#7a7a7a" stroke-width="0.95" stroke-dasharray="4.6 5.240"/>
<line x1="690.06" y1="158.69" x2="1227.50" y2="158.69" stroke="#7a7a7a" stroke-width="0.95" stroke-dasharray="4.6 5.240"/>
<line x1="690.06" y1="169.84" x2="1227.50" y2="169.84" stroke="#7a7a7a" stroke-width="0.95" stroke-dasharray="4.6 5.240"/>
<line x1="690.06" y1="181.00" x2="1227.50" y2="181.00" stroke="#7a7a7a" stroke-width="0.95" stroke-dasharray="4.6 5.240"/>
<line x1="690.06" y1="192.15" x2="1227.50" y2="192.15" stroke="#7a7a7a" stroke-width="0.95" stroke-dasharray="4.6 5.240"/>
<line x1="690.06" y1="203.31" x2="1227.50" y2="203.31" stroke="#7a7a7a" stroke-width="0.95" stroke-dasharray="4.6 5.240"/>
<line x1="690.06" y1="214.46" x2="1227.50" y2="214.46" stroke="#7a7a7a" stroke-width="0.95" stroke-dasharray="4.6 5.240"/>
<line x1="690.06" y1="225.61" x2="1227.50" y2="225.61" stroke="#7a7a7a" stroke-width="0.95" stroke-dasharray="4.6 5.240"/>
<line x1="690.06" y1="236.77" x2="1227.50" y2="236.77" stroke="#7a7a7a" stroke-width="0.95" stroke-dasharray="4.6 5.240"/>
<line x1="690.06" y1="247.92" x2="1227.50" y2="247.92" stroke="#7a7a7a" stroke-width="0.95" stroke-dasharray="4.6 5.240"/>
<line x1="690.06" y1="259.08" x2="1227.50" y2="259.08" stroke="#7a7a7a" stroke-width="0.95" stroke-dasharray="4.6 5.240"/>
<line x1="690.06" y1="270.24" x2="1227.50" y2="270.24" stroke="#7a7a7a" stroke-width="0.95" stroke-dasharray="4.6 5.240"/>
<line x1="690.06" y1="281.39" x2="1227.50" y2="281.39" stroke="#7a7a7a" stroke-width="0.95" stroke-dasharray="4.6 5.240"/>
<line x1="690.06" y1="292.54" x2="1227.50" y2="292.54" stroke="#7a7a7a" stroke-width="0.95" stroke-dasharray="4.6 5.240"/>
<line x1="690.06" y1="303.70" x2="1227.50" y2="303.70" stroke="#7a7a7a" stroke-width="0.95" stroke-dasharray="4.6 5.240"/>
<line x1="690.06" y1="314.86" x2="1227.50" y2="314.86" stroke="#7a7a7a" stroke-width="0.95" stroke-dasharray="4.6 5.240"/>
<line x1="690.06" y1="326.01" x2="1227.50" y2="326.01" stroke="#7a7a7a" stroke-width="0.95" stroke-dasharray="4.6 5.240"/>
<line x1="690.06" y1="337.16" x2="1227.50" y2="337.16" stroke="#7a7a7a" stroke-width="0.95" stroke-dasharray="4.6 5.240"/>
<line x1="690.06" y1="348.32" x2="1227.50" y2="348.32" stroke="#7a7a7a" stroke-width="0.95" stroke-dasharray="4.6 5.240"/>
<line x1="702.20" y1="73.82" x2="702.20" y2="353.80" stroke="#707070" stroke-width="1.0" stroke-dasharray="2.4 3.177"/>
<line x1="721.88" y1="73.82" x2="721.88" y2="353.80" stroke="#707070" stroke-width="1.0" stroke-dasharray="2.4 3.177"/>
<line x1="741.56" y1="73.82" x2="741.56" y2="353.80" stroke="#707070" stroke-width="1.0" stroke-dasharray="2.4 3.177"/>
<line x1="761.24" y1="73.82" x2="761.24" y2="353.80" stroke="#707070" stroke-width="1.0" stroke-dasharray="2.4 3.177"/>
<line x1="780.92" y1="73.82" x2="780.92" y2="353.80" stroke="#707070" stroke-width="1.0" stroke-dasharray="2.4 3.177"/>
<line x1="800.60" y1="73.82" x2="800.60" y2="353.80" stroke="#707070" stroke-width="1.0" stroke-dasharray="2.4 3.177"/>
<line x1="820.28" y1="73.82" x2="820.28" y2="353.80" stroke="#707070" stroke-width="1.0" stroke-dasharray="2.4 3.177"/>
<line x1="839.96" y1="73.82" x2="839.96" y2="353.80" stroke="#707070" stroke-width="1.0" stroke-dasharray="2.4 3.177"/>
<line x1="859.64" y1="73.82" x2="859.64" y2="353.80" stroke="#707070" stroke-width="1.0" stroke-dasharray="2.4 3.177"/>
<line x1="879.32" y1="73.82" x2="879.32" y2="353.80" stroke="#707070" stroke-width="1.0" stroke-dasharray="2.4 3.177"/>
<line x1="899.00" y1="73.82" x2="899.00" y2="353.80" stroke="#707070" stroke-width="1.0" stroke-dasharray="2.4 3.177"/>
<line x1="918.68" y1="73.82" x2="918.68" y2="353.80" stroke="#707070" stroke-width="1.0" stroke-dasharray="2.4 3.177"/>
<line x1="938.36" y1="73.82" x2="938.36" y2="353.80" stroke="#707070" stroke-width="1.0" stroke-dasharray="2.4 3.177"/>
<line x1="958.04" y1="73.82" x2="958.04" y2="353.80" stroke="#707070" stroke-width="1.0" stroke-dasharray="2.4 3.177"/>
<line x1="977.72" y1="73.82" x2="977.72" y2="353.80" stroke="#707070" stroke-width="1.0" stroke-dasharray="2.4 3.177"/>
<line x1="997.40" y1="73.82" x2="997.40" y2="353.80" stroke="#707070" stroke-width="1.0" stroke-dasharray="2.4 3.177"/>
<line x1="1017.08" y1="73.82" x2="1017.08" y2="353.80" stroke="#707070" stroke-width="1.0" stroke-dasharray="2.4 3.177"/>
<line x1="1036.76" y1="73.82" x2="1036.76" y2="353.80" stroke="#707070" stroke-width="1.0" stroke-dasharray="2.4 3.177"/>
<line x1="1056.44" y1="73.82" x2="1056.44" y2="353.80" stroke="#707070" stroke-width="1.0" stroke-dasharray="2.4 3.177"/>
<line x1="1076.12" y1="73.82" x2="1076.12" y2="353.80" stroke="#707070" stroke-width="1.0" stroke-dasharray="2.4 3.177"/>
<line x1="1095.80" y1="73.82" x2="1095.80" y2="353.80" stroke="#707070" stroke-width="1.0" stroke-dasharray="2.4 3.177"/>
<line x1="1115.48" y1="73.82" x2="1115.48" y2="353.80" stroke="#707070" stroke-width="1.0" stroke-dasharray="2.4 3.177"/>
<line x1="1135.16" y1="73.82" x2="1135.16" y2="353.80" stroke="#707070" stroke-width="1.0" stroke-dasharray="2.4 3.177"/>
<line x1="1154.84" y1="73.82" x2="1154.84" y2="353.80" stroke="#707070" stroke-width="1.0" stroke-dasharray="2.4 3.177"/>
<line x1="1174.52" y1="73.82" x2="1174.52" y2="353.80" stroke="#707070" stroke-width="1.0" stroke-dasharray="2.4 3.177"/>
<line x1="1194.20" y1="73.82" x2="1194.20" y2="353.80" stroke="#707070" stroke-width="1.0" stroke-dasharray="2.4 3.177"/>
<line x1="1213.88" y1="73.82" x2="1213.88" y2="353.80" stroke="#707070" stroke-width="1.0" stroke-dasharray="2.4 3.177"/>
</g>
<rect x="1227.50" y="76.80" width="26.00" height="276.60" fill="url(#dith)" />
<rect x="1227.50" y="76.80" width="26.00" height="14.20" fill="#cbcbc3" />
<rect x="1227.50" y="76.80" width="25.00" height="1.00" fill="#ffffff" />
<rect x="1227.50" y="76.80" width="1.00" height="13.20" fill="#ffffff" />
<rect x="1227.50" y="90.00" width="26.00" height="1.00" fill="#3c3c3a" />
<rect x="1252.50" y="76.80" width="1.00" height="14.20" fill="#3c3c3a" />
<rect x="1228.50" y="89.00" width="24.00" height="1.00" fill="#808078" />
<rect x="1251.50" y="77.80" width="1.00" height="12.20" fill="#808078" />
<path d="M1234.95,85.40 L1245.45,85.40 L1240.20,81.80 Z" fill="#000" stroke="none" stroke-width="1" />
<rect x="1227.50" y="206.40" width="26.00" height="14.20" fill="#cbcbc3" />
<rect x="1227.50" y="206.40" width="25.00" height="1.00" fill="#ffffff" />
<rect x="1227.50" y="206.40" width="1.00" height="13.20" fill="#ffffff" />
<rect x="1227.50" y="219.60" width="26.00" height="1.00" fill="#3c3c3a" />
<rect x="1252.50" y="206.40" width="1.00" height="14.20" fill="#3c3c3a" />
<rect x="1228.50" y="218.60" width="24.00" height="1.00" fill="#808078" />
<rect x="1251.50" y="207.40" width="1.00" height="12.20" fill="#808078" />
<rect x="1227.50" y="339.80" width="26.00" height="13.20" fill="#cbcbc3" />
<rect x="1227.50" y="339.80" width="25.00" height="1.00" fill="#ffffff" />
<rect x="1227.50" y="339.80" width="1.00" height="12.20" fill="#ffffff" />
<rect x="1227.50" y="352.00" width="26.00" height="1.00" fill="#3c3c3a" />
<rect x="1252.50" y="339.80" width="1.00" height="13.20" fill="#3c3c3a" />
<rect x="1228.50" y="351.00" width="24.00" height="1.00" fill="#808078" />
<rect x="1251.50" y="340.80" width="1.00" height="11.20" fill="#808078" />
<path d="M1234.95,344.30 L1245.45,344.30 L1240.20,347.90 Z" fill="#000" stroke="none" stroke-width="1" />
<rect x="698.20" y="353.80" width="529.30" height="14.00" fill="url(#dith)" />
<rect x="698.00" y="353.80" width="25.20" height="14.00" fill="#cbcbc3" />
<rect x="698.00" y="353.80" width="24.20" height="1.00" fill="#ffffff" />
<rect x="698.00" y="353.80" width="1.00" height="13.00" fill="#ffffff" />
<rect x="698.00" y="366.80" width="25.20" height="1.00" fill="#3c3c3a" />
<rect x="722.20" y="353.80" width="1.00" height="14.00" fill="#3c3c3a" />
<rect x="699.00" y="365.80" width="23.20" height="1.00" fill="#808078" />
<rect x="721.20" y="354.80" width="1.00" height="12.00" fill="#808078" />
<path d="M713.10,357.20 L713.10,363.80 L707.50,360.50 Z" fill="#000" stroke="none" stroke-width="1" />
<rect x="944.00" y="353.80" width="27.00" height="14.00" fill="#cbcbc3" />
<rect x="944.00" y="353.80" width="26.00" height="1.00" fill="#ffffff" />
<rect x="944.00" y="353.80" width="1.00" height="13.00" fill="#ffffff" />
<rect x="944.00" y="366.80" width="27.00" height="1.00" fill="#3c3c3a" />
<rect x="970.00" y="353.80" width="1.00" height="14.00" fill="#3c3c3a" />
<rect x="945.00" y="365.80" width="25.00" height="1.00" fill="#808078" />
<rect x="969.00" y="354.80" width="1.00" height="12.00" fill="#808078" />
<rect x="1203.60" y="353.80" width="23.60" height="14.00" fill="#cbcbc3" />
<rect x="1203.60" y="353.80" width="22.60" height="1.00" fill="#ffffff" />
<rect x="1203.60" y="353.80" width="1.00" height="13.00" fill="#ffffff" />
<rect x="1203.60" y="366.80" width="23.60" height="1.00" fill="#3c3c3a" />
<rect x="1226.20" y="353.80" width="1.00" height="14.00" fill="#3c3c3a" />
<rect x="1204.60" y="365.80" width="21.60" height="1.00" fill="#808078" />
<rect x="1225.20" y="354.80" width="1.00" height="12.00" fill="#808078" />
<path d="M1212.30,357.20 L1212.30,363.80 L1217.90,360.50 Z" fill="#000" stroke="none" stroke-width="1" />
<rect x="1227.50" y="353.80" width="26.00" height="14.00" fill="#c9c9c1" />
<rect x="1253.50" y="76.80" width="1.20" height="292.00" fill="#f4f4f0" />
<rect x="7.80" y="370.40" width="1248.00" height="3.00" fill="#dcdcd6" />
<rect x="7.80" y="373.50" width="1248.00" height="1.40" fill="#55554f" />
<rect x="7.80" y="375.10" width="1248.00" height="2.00" fill="#e8e8e4" />
<rect x="15.90" y="379.30" width="16.00" height="9.00" fill="#cbcbc3" />
<rect x="15.90" y="379.30" width="15.00" height="1.00" fill="#ffffff" />
<rect x="15.90" y="379.30" width="1.00" height="8.00" fill="#ffffff" />
<rect x="15.90" y="387.30" width="16.00" height="1.00" fill="#3c3c3a" />
<rect x="30.90" y="379.30" width="1.00" height="9.00" fill="#3c3c3a" />
<rect x="16.90" y="386.30" width="14.00" height="1.00" fill="#808078" />
<rect x="29.90" y="380.30" width="1.00" height="7.00" fill="#808078" />
<path d="M19.6,381.6 L28,386 M28,381.6 L19.6,386" fill="none" stroke="#101010" stroke-width="1.5" />
<rect x="15.90" y="390.00" width="16.00" height="9.40" fill="#cbcbc3" />
<rect x="15.90" y="390.00" width="15.00" height="1.00" fill="#ffffff" />
<rect x="15.90" y="390.00" width="1.00" height="8.40" fill="#ffffff" />
<rect x="15.90" y="398.40" width="16.00" height="1.00" fill="#3c3c3a" />
<rect x="30.90" y="390.00" width="1.00" height="9.40" fill="#3c3c3a" />
<rect x="16.90" y="397.40" width="14.00" height="1.00" fill="#808078" />
<rect x="29.90" y="391.00" width="1.00" height="7.40" fill="#808078" />
<path d="M21,392.2 L21,397.2 L27.6,394.7 Z" fill="#9a9a96" stroke="none" stroke-width="1" />
<rect x="19.20" y="402.00" width="4.20" height="69.00" fill="#d3d3cb" />
<rect x="19.20" y="402.00" width="1.10" height="69.00" fill="#fafaf6" />
<rect x="22.30" y="402.00" width="1.20" height="69.00" fill="#8c8c84" />
<rect x="25.20" y="402.00" width="4.20" height="69.00" fill="#d3d3cb" />
<rect x="25.20" y="402.00" width="1.10" height="69.00" fill="#fafaf6" />
<rect x="28.30" y="402.00" width="1.20" height="69.00" fill="#8c8c84" />
<rect x="34.30" y="377.70" width="1216.70" height="94.70" fill="#101010" />
<rect x="36.00" y="379.20" width="1213.00" height="91.60" fill="#ececec" />
<rect x="36.00" y="379.20" width="39.60" height="14.20" fill="#c6c6be" />
<rect x="36.00" y="379.20" width="39.60" height="1.00" fill="#f0f0ea" />
<rect x="36.00" y="379.20" width="1.20" height="14.20" fill="#f0f0ea" />
<rect x="74.10" y="379.20" width="1.50" height="14.20" fill="#3c3c3a" />
<rect x="75.60" y="379.20" width="138.30" height="14.20" fill="#c6c6be" />
<rect x="75.60" y="379.20" width="138.30" height="1.00" fill="#f0f0ea" />
<rect x="75.60" y="379.20" width="1.20" height="14.20" fill="#f0f0ea" />
<rect x="212.40" y="379.20" width="1.50" height="14.20" fill="#3c3c3a" />
<rect x="213.90" y="379.20" width="1011.50" height="14.20" fill="#c6c6be" />
<rect x="213.90" y="379.20" width="1011.50" height="1.00" fill="#f0f0ea" />
<rect x="213.90" y="379.20" width="1.20" height="14.20" fill="#f0f0ea" />
<rect x="1223.90" y="379.20" width="1.50" height="14.20" fill="#3c3c3a" />
<rect x="36.00" y="392.60" width="1189.40" height="1.40" fill="#202020" />
<text x="124.60" y="389.80" font-size="11.0" font-weight="bold" fill="#101010" textLength="41.20" lengthAdjust="spacingAndGlyphs" >Date</text>
<text x="669.50" y="389.80" font-size="11.0" font-weight="bold" fill="#101010" textLength="123.50" lengthAdjust="spacingAndGlyphs" >Message Text</text>
<clipPath id="clipMsg"><rect x="36" y="379" width="1190" height="77.8"/></clipPath>
<g clip-path="url(#clipMsg)">
<rect x="36.00" y="394.40" width="38.60" height="13.35" fill="#c8c8c0" />
<rect x="36.00" y="394.40" width="38.60" height="1.00" fill="#f2f2ee" />
<rect x="36.00" y="406.45" width="38.60" height="1.30" fill="#4a4a46" />
<rect x="73.80" y="394.40" width="2.00" height="13.35" fill="#202020" />
<text x="39.60" y="403.90" font-size="10.2" fill="#101010" textLength="6.80" lengthAdjust="spacingAndGlyphs" >1</text>
<line x1="74.60" y1="394.60" x2="1225.40" y2="394.60" stroke="#90908c" stroke-width="1" stroke-dasharray="1.2 1.4"/>
<text x="80.30" y="404.50" font-size="10.2" fill="#101010" textLength="68.30" lengthAdjust="spacingAndGlyphs" >04/17/04</text>
<text x="160.80" y="404.50" font-size="10.2" fill="#101010" textLength="50.60" lengthAdjust="spacingAndGlyphs" >10:0...</text>
<text x="219.10" y="404.50" font-size="10.2" fill="#101010" textLength="53.60" lengthAdjust="spacingAndGlyphs" >License</text>
<text x="279.30" y="404.50" font-size="10.2" fill="#101010" textLength="158.50" lengthAdjust="spacingAndGlyphs" >PCB_librarian_expert</text>
<text x="444.20" y="404.50" font-size="10.2" fill="#101010" textLength="58.90" lengthAdjust="spacingAndGlyphs" >checked</text>
<text x="510.70" y="404.50" font-size="10.2" fill="#101010" textLength="23.30" lengthAdjust="spacingAndGlyphs" >out</text>
<rect x="36.00" y="407.75" width="38.60" height="13.35" fill="#c8c8c0" />
<rect x="36.00" y="407.75" width="38.60" height="1.00" fill="#f2f2ee" />
<rect x="36.00" y="419.80" width="38.60" height="1.30" fill="#4a4a46" />
<rect x="73.80" y="407.75" width="2.00" height="13.35" fill="#202020" />
<text x="39.60" y="417.25" font-size="10.2" fill="#101010" textLength="6.80" lengthAdjust="spacingAndGlyphs" >2</text>
<line x1="74.60" y1="407.95" x2="1225.40" y2="407.95" stroke="#90908c" stroke-width="1" stroke-dasharray="1.2 1.4"/>
<text x="80.30" y="417.85" font-size="10.2" fill="#101010" textLength="68.30" lengthAdjust="spacingAndGlyphs" >04/17/04</text>
<text x="160.80" y="417.85" font-size="10.2" fill="#101010" textLength="50.60" lengthAdjust="spacingAndGlyphs" >10:0...</text>
<text x="219.50" y="417.85" font-size="10.2" fill="#101010" textLength="61.70" lengthAdjust="spacingAndGlyphs" >Opening</text>
<text x="286.90" y="417.85" font-size="10.2" fill="#101010" textLength="52.20" lengthAdjust="spacingAndGlyphs" >project</text>
<text x="345.80" y="417.85" font-size="10.2" fill="#101010" textLength="314.90" lengthAdjust="spacingAndGlyphs" >d:/SPB_Data/newproject/newproject.cpm</text>
<rect x="36.00" y="421.10" width="38.60" height="13.35" fill="#c8c8c0" />
<rect x="36.00" y="421.10" width="38.60" height="1.00" fill="#f2f2ee" />
<rect x="36.00" y="433.15" width="38.60" height="1.30" fill="#4a4a46" />
<rect x="73.80" y="421.10" width="2.00" height="13.35" fill="#202020" />
<text x="39.60" y="430.60" font-size="10.2" fill="#101010" textLength="6.80" lengthAdjust="spacingAndGlyphs" >3</text>
<line x1="74.60" y1="421.30" x2="1225.40" y2="421.30" stroke="#90908c" stroke-width="1" stroke-dasharray="1.2 1.4"/>
<text x="80.30" y="431.20" font-size="10.2" fill="#101010" textLength="68.30" lengthAdjust="spacingAndGlyphs" >04/17/04</text>
<text x="160.80" y="431.20" font-size="10.2" fill="#101010" textLength="50.60" lengthAdjust="spacingAndGlyphs" >10:0...</text>
<text x="219.50" y="431.20" font-size="10.2" fill="#101010" textLength="41.80" lengthAdjust="spacingAndGlyphs" >Cdslib</text>
<text x="268.50" y="431.20" font-size="10.2" fill="#101010" textLength="239.30" lengthAdjust="spacingAndGlyphs" >d:/SPB_Data/newproject/cds.lib</text>
<text x="515.40" y="431.20" font-size="10.2" fill="#101010" textLength="55.10" lengthAdjust="spacingAndGlyphs" >opened</text>
<rect x="36.00" y="434.45" width="38.60" height="13.35" fill="#c8c8c0" />
<rect x="36.00" y="434.45" width="38.60" height="1.00" fill="#f2f2ee" />
<rect x="36.00" y="446.50" width="38.60" height="1.30" fill="#4a4a46" />
<rect x="73.80" y="434.45" width="2.00" height="13.35" fill="#202020" />
<text x="39.60" y="443.95" font-size="10.2" fill="#101010" textLength="6.80" lengthAdjust="spacingAndGlyphs" >4</text>
<line x1="74.60" y1="434.65" x2="1225.40" y2="434.65" stroke="#90908c" stroke-width="1" stroke-dasharray="1.2 1.4"/>
<text x="80.30" y="444.55" font-size="10.2" fill="#101010" textLength="68.30" lengthAdjust="spacingAndGlyphs" >04/17/04</text>
<text x="160.80" y="444.55" font-size="10.2" fill="#101010" textLength="50.60" lengthAdjust="spacingAndGlyphs" >10:0...</text>
<text x="219.50" y="444.55" font-size="10.2" fill="#101010" textLength="52.20" lengthAdjust="spacingAndGlyphs" >Project</text>
<text x="278.40" y="444.55" font-size="10.2" fill="#101010" textLength="313.90" lengthAdjust="spacingAndGlyphs" >d:/SPB_Data/newproject/newproject.cpm</text>
<text x="599.00" y="444.55" font-size="10.2" fill="#101010" textLength="55.00" lengthAdjust="spacingAndGlyphs" >opened</text>
<rect x="36.00" y="447.80" width="38.60" height="13.35" fill="#c8c8c0" />
<rect x="36.00" y="447.80" width="38.60" height="1.00" fill="#f2f2ee" />
<rect x="36.00" y="459.85" width="38.60" height="1.30" fill="#4a4a46" />
<rect x="73.80" y="447.80" width="2.00" height="13.35" fill="#202020" />
<text x="39.60" y="457.30" font-size="10.2" fill="#101010" textLength="6.80" lengthAdjust="spacingAndGlyphs" >5</text>
<line x1="74.60" y1="448.00" x2="1225.40" y2="448.00" stroke="#90908c" stroke-width="1" stroke-dasharray="1.2 1.4"/>
<text x="80.30" y="457.90" font-size="10.2" fill="#101010" textLength="68.30" lengthAdjust="spacingAndGlyphs" >04/17/04</text>
<text x="160.80" y="457.90" font-size="10.2" fill="#101010" textLength="50.60" lengthAdjust="spacingAndGlyphs" >10:0...</text>
<text x="219.50" y="457.90" font-size="10.2" fill="#101010" textLength="57.00" lengthAdjust="spacingAndGlyphs" >Starting</text>
<text x="284.00" y="457.90" font-size="10.2" fill="#101010" textLength="77.90" lengthAdjust="spacingAndGlyphs" >validations</text>
<text x="368.50" y="457.90" font-size="10.2" fill="#101010" textLength="15.20" lengthAdjust="spacingAndGlyphs" >on</text>
<text x="390.40" y="457.90" font-size="10.2" fill="#101010" textLength="25.60" lengthAdjust="spacingAndGlyphs" >cell</text>
<text x="421.70" y="457.90" font-size="10.2" fill="#101010" textLength="64.30" lengthAdjust="spacingAndGlyphs" >74lvt574</text>
<text x="492.70" y="457.90" font-size="10.2" fill="#101010" textLength="10.40" lengthAdjust="spacingAndGlyphs" >of</text>
<text x="511.60" y="457.90" font-size="10.2" fill="#101010" textLength="41.80" lengthAdjust="spacingAndGlyphs" >library</text>
<text x="562.90" y="457.90" font-size="10.2" fill="#101010" textLength="41.80" lengthAdjust="spacingAndGlyphs" >schlib</text>
<line x1="214.20" y1="394.40" x2="214.20" y2="457.00" stroke="#90908c" stroke-width="1.2" stroke-dasharray="1.2 1.4"/>
</g>
<rect x="1225.40" y="379.20" width="24.40" height="77.60" fill="url(#dith)" />
<rect x="1225.40" y="379.20" width="24.40" height="13.00" fill="#cbcbc3" />
<rect x="1225.40" y="379.20" width="23.40" height="1.00" fill="#ffffff" />
<rect x="1225.40" y="379.20" width="1.00" height="12.00" fill="#ffffff" />
<rect x="1225.40" y="391.20" width="24.40" height="1.00" fill="#3c3c3a" />
<rect x="1248.80" y="379.20" width="1.00" height="13.00" fill="#3c3c3a" />
<rect x="1226.40" y="390.20" width="22.40" height="1.00" fill="#808078" />
<rect x="1247.80" y="380.20" width="1.00" height="11.00" fill="#808078" />
<path d="M1232.05,387.20 L1242.55,387.20 L1237.30,383.60 Z" fill="#000" stroke="none" stroke-width="1" />
<rect x="1225.40" y="392.60" width="24.40" height="33.00" fill="#cbcbc3" />
<rect x="1225.40" y="392.60" width="23.40" height="1.00" fill="#ffffff" />
<rect x="1225.40" y="392.60" width="1.00" height="32.00" fill="#ffffff" />
<rect x="1225.40" y="424.60" width="24.40" height="1.00" fill="#3c3c3a" />
<rect x="1248.80" y="392.60" width="1.00" height="33.00" fill="#3c3c3a" />
<rect x="1226.40" y="423.60" width="22.40" height="1.00" fill="#808078" />
<rect x="1247.80" y="393.60" width="1.00" height="31.00" fill="#808078" />
<rect x="1225.40" y="443.00" width="24.40" height="12.60" fill="#cbcbc3" />
<rect x="1225.40" y="443.00" width="23.40" height="1.00" fill="#ffffff" />
<rect x="1225.40" y="443.00" width="1.00" height="11.60" fill="#ffffff" />
<rect x="1225.40" y="454.60" width="24.40" height="1.00" fill="#3c3c3a" />
<rect x="1248.80" y="443.00" width="1.00" height="12.60" fill="#3c3c3a" />
<rect x="1226.40" y="453.60" width="22.40" height="1.00" fill="#808078" />
<rect x="1247.80" y="444.00" width="1.00" height="10.60" fill="#808078" />
<path d="M1232.05,447.20 L1242.55,447.20 L1237.30,450.80 Z" fill="#000" stroke="none" stroke-width="1" />
<rect x="36.00" y="456.80" width="1189.40" height="14.00" fill="url(#dith)" />
<rect x="36.20" y="456.80" width="23.00" height="14.00" fill="#cbcbc3" />
<rect x="36.20" y="456.80" width="22.00" height="1.00" fill="#ffffff" />
<rect x="36.20" y="456.80" width="1.00" height="13.00" fill="#ffffff" />
<rect x="36.20" y="469.80" width="23.00" height="1.00" fill="#3c3c3a" />
<rect x="58.20" y="456.80" width="1.00" height="14.00" fill="#3c3c3a" />
<rect x="37.20" y="468.80" width="21.00" height="1.00" fill="#808078" />
<rect x="57.20" y="457.80" width="1.00" height="12.00" fill="#808078" />
<path d="M50.20,460.20 L50.20,466.80 L44.60,463.50 Z" fill="#000" stroke="none" stroke-width="1" />
<rect x="61.40" y="456.80" width="568.60" height="14.00" fill="#cbcbc3" />
<rect x="61.40" y="456.80" width="567.60" height="1.00" fill="#ffffff" />
<rect x="61.40" y="456.80" width="1.00" height="13.00" fill="#ffffff" />
<rect x="61.40" y="469.80" width="568.60" height="1.00" fill="#3c3c3a" />
<rect x="629.00" y="456.80" width="1.00" height="14.00" fill="#3c3c3a" />
<rect x="62.40" y="468.80" width="566.60" height="1.00" fill="#808078" />
<rect x="628.00" y="457.80" width="1.00" height="12.00" fill="#808078" />
<rect x="1201.00" y="456.80" width="23.00" height="14.00" fill="#cbcbc3" />
<rect x="1201.00" y="456.80" width="22.00" height="1.00" fill="#ffffff" />
<rect x="1201.00" y="456.80" width="1.00" height="13.00" fill="#ffffff" />
<rect x="1201.00" y="469.80" width="23.00" height="1.00" fill="#3c3c3a" />
<rect x="1223.00" y="456.80" width="1.00" height="14.00" fill="#3c3c3a" />
<rect x="1202.00" y="468.80" width="21.00" height="1.00" fill="#808078" />
<rect x="1222.00" y="457.80" width="1.00" height="12.00" fill="#808078" />
<path d="M1209.40,460.20 L1209.40,466.80 L1215.00,463.50 Z" fill="#000" stroke="none" stroke-width="1" />
<rect x="1224.40" y="456.40" width="25.40" height="14.40" fill="#c9c9c1" />
<rect x="7.80" y="474.30" width="1248.00" height="1.00" fill="#8c8c84" />
<rect x="7.80" y="475.30" width="1248.00" height="1.00" fill="#f4f4f0" />
<rect x="7.80" y="477.50" width="1248.00" height="15.00" fill="#c9c9c1" />
<rect x="7.80" y="495.20" width="1248.00" height="13.40" fill="#c9c9c1" />
<rect x="7.80" y="477.50" width="1218.60" height="1.10" fill="#8c8c84" />
<rect x="7.80" y="477.50" width="1.10" height="15.00" fill="#8c8c84" />
<rect x="7.80" y="491.60" width="1218.60" height="1.00" fill="#fafaf6" />
<rect x="1225.40" y="477.50" width="1.00" height="15.00" fill="#fafaf6" />
<rect x="7.80" y="495.20" width="691.80" height="1.10" fill="#8c8c84" />
<rect x="7.80" y="495.20" width="1.10" height="13.40" fill="#8c8c84" />
<rect x="7.80" y="507.80" width="691.80" height="1.00" fill="#fafaf6" />
<rect x="698.60" y="495.20" width="1.00" height="13.40" fill="#fafaf6" />
<rect x="704.60" y="495.20" width="521.80" height="1.10" fill="#8c8c84" />
<rect x="704.60" y="495.20" width="1.10" height="13.40" fill="#8c8c84" />
<rect x="704.60" y="507.80" width="521.80" height="1.00" fill="#fafaf6" />
<rect x="1225.40" y="495.20" width="1.00" height="13.40" fill="#fafaf6" />
<path d="M1239.00,492.00 L1254.60,482.60" fill="none" stroke="#8c8c84" stroke-width="1.1" />
<path d="M1240.40,492.60 L1254.60,483.60" fill="none" stroke="#fafaf6" stroke-width="0.9" />
<path d="M1244.72,492.00 L1254.60,485.68" fill="none" stroke="#8c8c84" stroke-width="1.1" />
<path d="M1246.12,492.60 L1254.60,486.68" fill="none" stroke="#fafaf6" stroke-width="0.9" />
<path d="M1250.44,492.00 L1254.60,488.76" fill="none" stroke="#8c8c84" stroke-width="1.1" />
<path d="M1251.84,492.60 L1254.60,489.76" fill="none" stroke="#fafaf6" stroke-width="0.9" />
<path d="M1239.00,509.00 L1254.60,499.60" fill="none" stroke="#8c8c84" stroke-width="1.1" />
<path d="M1240.40,509.60 L1254.60,500.60" fill="none" stroke="#fafaf6" stroke-width="0.9" />
<path d="M1244.72,509.00 L1254.60,502.68" fill="none" stroke="#8c8c84" stroke-width="1.1" />
<path d="M1246.12,509.60 L1254.60,503.68" fill="none" stroke="#fafaf6" stroke-width="0.9" />
<path d="M1250.44,509.00 L1254.60,505.76" fill="none" stroke="#8c8c84" stroke-width="1.1" />
<path d="M1251.84,509.60 L1254.60,506.76" fill="none" stroke="#fafaf6" stroke-width="0.9" />
<rect x="2.20" y="509.80" width="1259.20" height="1.50" fill="#f4f4f0" />
<rect x="0.00" y="511.30" width="1264.00" height="1.90" fill="#55554f" />
<rect x="0.00" y="513.20" width="1261.40" height="24.80" fill="#c9c9c1" />
<rect x="0.00" y="513.20" width="1261.40" height="1.00" fill="#ecece8" />
<line x1="24.00" y1="514.60" x2="90.00" y2="514.60" stroke="#f4f4f0" stroke-width="1.2" stroke-dasharray="2 3 5 2 1 4 3 2"/>
<line x1="150.00" y1="514.60" x2="206.00" y2="514.60" stroke="#f4f4f0" stroke-width="1.2" stroke-dasharray="2 3 5 2 1 4 3 2"/>
<rect x="2.50" y="517.20" width="86.70" height="18.80" fill="#cbcbc3" />
<rect x="2.50" y="517.20" width="85.50" height="1.20" fill="#ffffff" />
<rect x="2.50" y="517.20" width="1.20" height="17.60" fill="#ffffff" />
<rect x="2.50" y="534.80" width="86.70" height="1.20" fill="#3c3c3a" />
<rect x="88.00" y="517.20" width="1.20" height="18.80" fill="#3c3c3a" />
<rect x="3.70" y="533.60" width="84.30" height="1.20" fill="#808078" />
<rect x="86.80" y="518.40" width="1.20" height="16.40" fill="#808078" />
<path d="M19.9,522.4 q7,-3 14.3,-0.2 l0,10.8 q-7,-3 -14.3,0 Z" fill="#141414" stroke="none" stroke-width="1" />
<rect x="21.20" y="522.60" width="4.60" height="3.30" fill="#d81818" />
<rect x="27.20" y="522.00" width="4.80" height="3.60" fill="#18a828" />
<rect x="21.20" y="527.00" width="4.60" height="3.80" fill="#1818d0" />
<rect x="27.60" y="527.20" width="4.20" height="3.80" fill="#e8e040" />
<rect x="12.00" y="524.00" width="8.00" height="1.20" fill="#181818" />
<rect x="12.00" y="525.20" width="8.00" height="1.30" fill="#e84040" />
<rect x="12.00" y="526.60" width="8.00" height="1.00" fill="#f0c0c0" />
<rect x="12.00" y="528.20" width="8.00" height="1.00" fill="#c0c0f8" />
<rect x="12.00" y="529.30" width="8.00" height="1.40" fill="#3030e0" />
<rect x="12.00" y="531.40" width="8.00" height="1.30" fill="#181818" />
<rect x="9.20" y="523.20" width="1.50" height="1.30" fill="#303030" />
<rect x="9.20" y="526.40" width="1.50" height="1.30" fill="#303030" />
<rect x="9.20" y="528.80" width="1.50" height="1.30" fill="#303030" />
<rect x="9.20" y="531.60" width="1.50" height="1.30" fill="#303030" />
<text x="37.30" y="531.00" font-size="10.8" font-weight="bold" fill="#101010" textLength="45.00" lengthAdjust="spacingAndGlyphs" >Start</text>
<rect x="94.30" y="516.60" width="1.00" height="19.60" fill="#8c8c84" />
<rect x="95.30" y="516.60" width="1.00" height="19.60" fill="#fafaf6" />
<rect x="100.60" y="518.90" width="4.20" height="15.20" fill="#d5d5cd" />
<rect x="100.60" y="518.90" width="1.10" height="15.20" fill="#fafaf6" />
<rect x="103.80" y="518.90" width="1.10" height="15.20" fill="#8c8c84" />
<rect x="100.60" y="533.20" width="4.20" height="1.00" fill="#8c8c84" />
<rect x="488.00" y="518.90" width="4.20" height="15.20" fill="#d5d5cd" />
<rect x="488.00" y="518.90" width="1.10" height="15.20" fill="#fafaf6" />
<rect x="491.20" y="518.90" width="1.10" height="15.20" fill="#8c8c84" />
<rect x="488.00" y="533.20" width="4.20" height="1.00" fill="#8c8c84" />
<rect x="482.40" y="516.60" width="1.00" height="19.60" fill="#8c8c84" />
<rect x="483.40" y="516.60" width="1.00" height="19.60" fill="#fafaf6" />
<rect x="117.00" y="522.40" width="24.60" height="10.40" fill="#4888b8" />
<rect x="117.00" y="531.60" width="24.60" height="2.00" fill="#203048" />
<path d="M117,522.4 L129,527.6 L141.6,521 L141.6,526 L129,531 L117,527 Z" fill="#78b8d0" stroke="none" stroke-width="1" />
<rect x="124.00" y="523.60" width="11.00" height="8.20" fill="#e8dcb0" stroke="#605030" stroke-width="1"/>
<rect x="127.40" y="526.00" width="4.40" height="3.80" fill="#f4f0d8" stroke="#403820" stroke-width="0.9"/>
<path d="M131,526 L139,520.6" fill="none" stroke="#d8b850" stroke-width="2" />
<text x="155.60" y="533.20" font-size="20" font-weight="bold" fill="#2c5cdc" textLength="21.50" lengthAdjust="spacingAndGlyphs" >e</text>
<path d="M154.4,531.8 q-2,-4.6 8,-9.4 q9,-4 15.4,-1.6" fill="none" stroke="#7ca0f0" stroke-width="1.7" />
<ellipse cx="161.50" cy="532.60" rx="5.60" ry="1.20" fill="#6080e0" stroke="none" stroke-width="1" />
<rect x="190.40" y="523.40" width="23.60" height="9.20" fill="#f0e8c0" stroke="#404040" stroke-width="1.1"/>
<rect x="208.40" y="524.40" width="3.60" height="2.40" fill="#e03030" />
<path d="M196,521.6 q6,-2.6 11,1.4 M192.6,522.6 l4.4,-2.4 l0.4,4 Z" fill="#2850d0" stroke="#2850d0" stroke-width="2.2" />
<path d="M208,533.6 q-6,2.4 -11,-1 M211,532.6 l-4.4,2.6 l-0.4,-4 Z" fill="#2850d0" stroke="#2850d0" stroke-width="2.2" />
<rect x="226.00" y="520.00" width="25.30" height="14.00" fill="#8c8c20" />
<ellipse cx="238.60" cy="527.00" rx="8.60" ry="4.60" fill="#f0f0a8" stroke="none" stroke-width="1" />
<path d="M229,521.8 l4,0 l-4,2.4 Z M248.4,521.8 l-4,0 l4,2.4 Z M229,532.4 l4,0 l-4,-2.4 Z M248.4,532.4 l-4,0 l4,-2.4 Z" fill="#f0f0a8" stroke="none" stroke-width="1" />
<ellipse cx="238.60" cy="527.00" rx="5.80" ry="3.00" fill="#8c8c20" stroke="none" stroke-width="1" />
<path d="M238,524.6 L238,527.8 L242.6,527.8" fill="none" stroke="#f0f0a8" stroke-width="1.5" />
<path d="M263,525 L279,521.4 L275,532.6 Z" fill="#a0a0a4" stroke="#505050" stroke-width="1" />
<path d="M268,525.6 L276,524 L274,530 Z" fill="#d8d8d8" stroke="none" stroke-width="1" />
<ellipse cx="281.60" cy="523.60" rx="5.40" ry="3.20" fill="#20b838" stroke="#106018" stroke-width="0.8" />
<rect x="274.60" y="528.40" width="3.60" height="3.60" fill="#e07838" />
<ellipse cx="311.60" cy="526.80" rx="12.00" ry="6.40" fill="#d8c040" stroke="#181810" stroke-width="1.8" />
<text x="302.60" y="531.00" font-size="10.4" font-weight="bold" fill="#181810" textLength="18.00" lengthAdjust="spacingAndGlyphs" font-style="italic">UE</text>
<ellipse cx="347.00" cy="526.60" rx="10.00" ry="5.60" fill="#2848c8" stroke="none" stroke-width="1" />
<path d="M338.6,524 q4,-4.6 11,-3 q6,1.6 7,6.6 q-5,-2.6 -9,-1 q-4,1.4 -9,-2.6 Z" fill="#208838" stroke="none" stroke-width="1" />
<ellipse cx="352.60" cy="530.40" rx="5.40" ry="2.80" fill="#e8f0f0" stroke="none" stroke-width="1" />
<ellipse cx="341.40" cy="529.00" rx="2.60" ry="1.60" fill="#e0e8f8" stroke="none" stroke-width="1" />
<path d="M382.6,526.2 L371.2,526.2 A11.4,6.6 0 0 1 382.6,519.6 Z" fill="#e86030" stroke="none" stroke-width="1" />
<path d="M382.6,526.2 L382.6,519.6 A11.4,6.6 0 0 1 394,526.2 Z" fill="#40a838" stroke="none" stroke-width="1" />
<path d="M382.6,526.2 L394,526.2 A11.4,6.6 0 0 1 382.6,532.8 Z" fill="#e8c828" stroke="none" stroke-width="1" />
<path d="M382.6,526.2 L382.6,532.8 A11.4,6.6 0 0 1 371.2,526.2 Z" fill="#3060d0" stroke="none" stroke-width="1" />
<ellipse cx="382.60" cy="526.20" rx="7.40" ry="3.90" fill="#f4f4f4" stroke="none" stroke-width="1" />
<path d="M379.6,523.8 L379.6,528.6 L387,526.2 Z" fill="#181818" stroke="none" stroke-width="1" />
<ellipse cx="420.40" cy="526.40" rx="12.40" ry="5.40" fill="#a8c4e8" stroke="#6888c0" stroke-width="1.2" />
<path d="M412,530 l-1,4 l6,-2.6 Z" fill="#88a8d8" stroke="none" stroke-width="1" />
<ellipse cx="420.40" cy="526.40" rx="7.20" ry="3.20" fill="#e8f0fc" stroke="#3858a8" stroke-width="1.4" />
<path d="M418.4,524.8 L418.4,528.2 L423.6,526.4 Z" fill="#202860" stroke="none" stroke-width="1" />
<path d="M445,530 L452,522 L468.6,523 L462,532 Z" fill="#40a040" stroke="none" stroke-width="1" />
<path d="M446,529.6 L466,522.4" fill="none" stroke="#e8d030" stroke-width="3" />
<path d="M452,532.6 L468,525.6" fill="none" stroke="#e8d030" stroke-width="2.4" />
<ellipse cx="456.60" cy="523.00" rx="4.00" ry="2.20" fill="#30a8d8" stroke="none" stroke-width="1" />
<ellipse cx="457.00" cy="531.00" rx="4.40" ry="2.00" fill="#2858d0" stroke="none" stroke-width="1" />
<rect x="499.60" y="517.40" width="34.00" height="18.60" fill="#cbcbc3" />
<rect x="499.60" y="517.40" width="32.80" height="1.20" fill="#ffffff" />
<rect x="499.60" y="517.40" width="1.20" height="17.40" fill="#ffffff" />
<rect x="499.60" y="534.80" width="34.00" height="1.20" fill="#3c3c3a" />
<rect x="532.40" y="517.40" width="1.20" height="18.60" fill="#3c3c3a" />
<rect x="500.80" y="533.60" width="31.60" height="1.20" fill="#808078" />
<rect x="531.20" y="518.60" width="1.20" height="16.20" fill="#808078" />
<rect x="538.80" y="517.40" width="34.00" height="18.60" fill="#cbcbc3" />
<rect x="538.80" y="517.40" width="32.80" height="1.20" fill="#ffffff" />
<rect x="538.80" y="517.40" width="1.20" height="17.40" fill="#ffffff" />
<rect x="538.80" y="534.80" width="34.00" height="1.20" fill="#3c3c3a" />
<rect x="571.60" y="517.40" width="1.20" height="18.60" fill="#3c3c3a" />
<rect x="540.00" y="533.60" width="31.60" height="1.20" fill="#808078" />
<rect x="570.40" y="518.60" width="1.20" height="16.20" fill="#808078" />
<rect x="578.20" y="517.40" width="34.00" height="18.60" fill="#cbcbc3" />
<rect x="578.20" y="517.40" width="32.80" height="1.20" fill="#ffffff" />
<rect x="578.20" y="517.40" width="1.20" height="17.40" fill="#ffffff" />
<rect x="578.20" y="534.80" width="34.00" height="1.20" fill="#3c3c3a" />
<rect x="611.00" y="517.40" width="1.20" height="18.60" fill="#3c3c3a" />
<rect x="579.40" y="533.60" width="31.60" height="1.20" fill="#808078" />
<rect x="609.80" y="518.60" width="1.20" height="16.20" fill="#808078" />
<rect x="618.00" y="517.40" width="34.00" height="18.60" fill="#cbcbc3" />
<rect x="618.00" y="517.40" width="32.80" height="1.20" fill="#ffffff" />
<rect x="618.00" y="517.40" width="1.20" height="17.40" fill="#ffffff" />
<rect x="618.00" y="534.80" width="34.00" height="1.20" fill="#3c3c3a" />
<rect x="650.80" y="517.40" width="1.20" height="18.60" fill="#3c3c3a" />
<rect x="619.20" y="533.60" width="31.60" height="1.20" fill="#808078" />
<rect x="649.60" y="518.60" width="1.20" height="16.20" fill="#808078" />
<rect x="658.00" y="517.40" width="34.00" height="18.60" fill="#cbcbc3" />
<rect x="658.00" y="517.40" width="32.80" height="1.20" fill="#ffffff" />
<rect x="658.00" y="517.40" width="1.20" height="17.40" fill="#ffffff" />
<rect x="658.00" y="534.80" width="34.00" height="1.20" fill="#3c3c3a" />
<rect x="690.80" y="517.40" width="1.20" height="18.60" fill="#3c3c3a" />
<rect x="659.20" y="533.60" width="31.60" height="1.20" fill="#808078" />
<rect x="689.60" y="518.60" width="1.20" height="16.20" fill="#808078" />
<rect x="697.20" y="517.40" width="34.00" height="18.60" fill="#cbcbc3" />
<rect x="697.20" y="517.40" width="32.80" height="1.20" fill="#ffffff" />
<rect x="697.20" y="517.40" width="1.20" height="17.40" fill="#ffffff" />
<rect x="697.20" y="534.80" width="34.00" height="1.20" fill="#3c3c3a" />
<rect x="730.00" y="517.40" width="1.20" height="18.60" fill="#3c3c3a" />
<rect x="698.40" y="533.60" width="31.60" height="1.20" fill="#808078" />
<rect x="728.80" y="518.60" width="1.20" height="16.20" fill="#808078" />
<rect x="736.50" y="517.40" width="32.60" height="18.20" fill="#e6e5de" />
<rect x="736.50" y="517.40" width="32.60" height="1.30" fill="#3c3c3a" />
<rect x="736.50" y="517.40" width="1.50" height="18.20" fill="#3c3c3a" />
<rect x="738.00" y="518.70" width="30.00" height="1.00" fill="#8c8c84" />
<rect x="738.00" y="518.70" width="1.00" height="16.00" fill="#8c8c84" />
<rect x="736.50" y="534.60" width="32.60" height="1.00" fill="#fafaf6" />
<rect x="768.10" y="517.40" width="1.00" height="18.20" fill="#fafaf6" />
<path d="M505.6,532.6 L505.6,523 L509.6,521.4 L515.6,521.4 L517.6,523 L528.2,523 L528.2,532.6 Z" fill="#e8e090" stroke="#686830" stroke-width="1" />
<path d="M517.6,527.6 L527.2,533" fill="none" stroke="#181840" stroke-width="3" />
<path d="M518.6,528.2 L526.6,532.6" fill="none" stroke="#3858e0" stroke-width="1.5" />
<ellipse cx="513.60" cy="525.80" rx="5.20" ry="3.30" fill="#90e0e8" stroke="#283838" stroke-width="1.3" />
<rect x="544.80" y="519.60" width="25.60" height="14.40" fill="#e08030" />
<rect x="547.80" y="521.60" width="19.60" height="10.40" fill="none" stroke="#f8d0a0" stroke-width="1.3"/>
<path d="M552.8,527 q3,-3 7,-2.6 l0,-1.4 l4,0 l0,6.6 l-8,0 q-2,-0.6 -3,-2.6 Z" fill="#fff4e4" stroke="none" stroke-width="1" />
<ellipse cx="591.60" cy="522.80" rx="5.60" ry="3.00" fill="#189090" stroke="#102828" stroke-width="1" />
<ellipse cx="602.80" cy="526.40" rx="5.40" ry="3.00" fill="#e020e0" stroke="#301030" stroke-width="1" />
<ellipse cx="591.60" cy="530.60" rx="5.80" ry="3.10" fill="#1818e0" stroke="#101040" stroke-width="1" />
<path d="M595.8000000000001,524.6 L598.2,525.6 M595.8000000000001,529 L598.2,527.6" fill="none" stroke="#202020" stroke-width="1" />
<ellipse cx="631.40" cy="522.80" rx="5.60" ry="3.00" fill="#189090" stroke="#102828" stroke-width="1" />
<ellipse cx="642.60" cy="526.40" rx="5.40" ry="3.00" fill="#e020e0" stroke="#301030" stroke-width="1" />
<ellipse cx="631.40" cy="530.60" rx="5.80" ry="3.10" fill="#1818e0" stroke="#101040" stroke-width="1" />
<path d="M635.6,524.6 L638.0,525.6 M635.6,529 L638.0,527.6" fill="none" stroke="#202020" stroke-width="1" />
<rect x="664.30" y="520.80" width="24.20" height="12.60" fill="#30e0e8" stroke="#107078" stroke-width="1"/>
<path d="M667.0,530.4 l5.6,0 l0,-6 l3.4,0 M676.0,523.4 l9,-1 M676.0,526.6 l9,-1 M676.0,530 l9,-1" fill="none" stroke="#105058" stroke-width="1.7" />
<rect x="665.40" y="521.60" width="2.00" height="11.00" fill="#107078" />
<rect x="703.80" y="522.60" width="22.00" height="10.60" fill="#f0e8e8" stroke="#d04040" stroke-width="1.3"/>
<path d="M708.2,531.6 q6,-3 9,-11 q1,-1.6 2,0 q2,5 9,6.4 M714.2,527 l12,-0.4" fill="none" stroke="#e03030" stroke-width="1.6" />
<rect x="756.94" y="527.93" width="10.56" height="6.07" fill="#1818d8" stroke="#080850" stroke-width="0.8"/>
<rect x="757.42" y="528.06" width="9.60" height="1.32" fill="#e8e8f8" />
<ellipse cx="760.30" cy="524.23" rx="5.64" ry="3.30" fill="#f0f020" stroke="#303008" stroke-width="0.9"/>
<path d="M743.50,532.94 L757.18,532.94 L751.42,525.55 Z" fill="#e81818" stroke="#780808" stroke-width="0.7" />
<path d="M749.98,528.98 L751.42,527.40" fill="none" stroke="#ffb0b0" stroke-width="0.9" />
<rect x="781.40" y="518.20" width="22.80" height="7.80" fill="#cbcbc3" />
<rect x="781.40" y="518.20" width="21.80" height="1.00" fill="#ffffff" />
<rect x="781.40" y="518.20" width="1.00" height="6.80" fill="#ffffff" />
<rect x="781.40" y="525.00" width="22.80" height="1.00" fill="#3c3c3a" />
<rect x="803.20" y="518.20" width="1.00" height="7.80" fill="#3c3c3a" />
<rect x="782.40" y="524.00" width="20.80" height="1.00" fill="#808078" />
<rect x="802.20" y="519.20" width="1.00" height="5.80" fill="#808078" />
<path d="M790.10,523.00 L794.70,523.00 L792.40,520.80 Z" fill="#000" stroke="none" stroke-width="1" />
<rect x="781.40" y="527.20" width="22.80" height="8.20" fill="#cbcbc3" />
<rect x="781.40" y="527.20" width="21.80" height="1.00" fill="#ffffff" />
<rect x="781.40" y="527.20" width="1.00" height="7.20" fill="#ffffff" />
<rect x="781.40" y="534.40" width="22.80" height="1.00" fill="#3c3c3a" />
<rect x="803.20" y="527.20" width="1.00" height="8.20" fill="#3c3c3a" />
<rect x="782.40" y="533.40" width="20.80" height="1.00" fill="#808078" />
<rect x="802.20" y="528.20" width="1.00" height="6.20" fill="#808078" />
<path d="M790.10,530.20 L794.70,530.20 L792.40,532.40 Z" fill="#000" stroke="none" stroke-width="1" />
<rect x="815.60" y="517.60" width="117.20" height="1.10" fill="#8c8c84" />
<rect x="815.60" y="517.60" width="1.10" height="18.00" fill="#8c8c84" />
<rect x="815.60" y="534.80" width="117.20" height="1.00" fill="#fafaf6" />
<rect x="931.80" y="517.60" width="1.00" height="18.00" fill="#fafaf6" />
<rect x="819.40" y="519.20" width="67.00" height="13.80" fill="#5c5c58" />
<rect x="820.60" y="520.20" width="65.20" height="11.80" fill="#60e040" />
<rect x="820.60" y="520.20" width="65.20" height="1.00" fill="#a0f088" />
<rect x="820.60" y="520.20" width="1.00" height="11.80" fill="#a0f088" />
<text x="834.00" y="529.80" font-size="10.6" font-weight="bold" fill="#0c1c08" textLength="41.00" lengthAdjust="spacingAndGlyphs" >97%</text>
<rect x="886.40" y="519.20" width="3.20" height="14.40" fill="#8a8a86" />
<rect x="889.60" y="523.40" width="5.80" height="5.60" fill="#d8d8d4" stroke="#6c6c68" stroke-width="1.1"/>
<rect x="900.40" y="525.60" width="6.00" height="1.30" fill="#181818" />
<path d="M906,526.2 L909.6,522 L921,522 L921,531 L909.6,531 Z" fill="#101010" stroke="none" stroke-width="1" />
<rect x="921.00" y="523.20" width="8.40" height="1.30" fill="#181818" />
<rect x="921.00" y="528.60" width="8.40" height="1.30" fill="#181818" />
<rect x="942.20" y="517.60" width="318.00" height="1.10" fill="#8c8c84" />
<rect x="942.20" y="517.60" width="1.10" height="18.00" fill="#8c8c84" />
<rect x="942.20" y="534.80" width="318.00" height="1.00" fill="#fafaf6" />
<rect x="1259.20" y="517.60" width="1.00" height="18.00" fill="#fafaf6" />
<path d="M948.6,522.4 L965,520.2 L966.8,522 L950,526.6 Z" fill="#20c028" stroke="#106018" stroke-width="0.7" />
<path d="M949,527.6 L962,525 L973,529 L959,533 Z" fill="#f0f0f0" stroke="#606060" stroke-width="0.9" />
<path d="M949,527.6 L949,529.4 L959,534.4 L973,530.4 L973,529" fill="none" stroke="#505050" stroke-width="1.1" />
<path d="M961,526.4 L968,528.6" fill="none" stroke="#20a030" stroke-width="1.6" />
<path d="M976.6,526.6 L987.4,520.4 L987.4,533 Z" fill="#e8d840" stroke="#686020" stroke-width="0.8" />
<ellipse cx="989.00" cy="526.70" rx="2.80" ry="6.20" fill="#b8b8b8" stroke="#282828" stroke-width="1.2" />
<ellipse cx="988.60" cy="526.70" rx="1.20" ry="2.40" fill="#202020" stroke="none" stroke-width="1" />
<path d="M994,523.6 L1000,521.6 M994.6,526.8 L1000.6,526.8 M994,530 L1000,532" fill="none" stroke="#a8a8a4" stroke-width="1" />
<rect x="1008.00" y="520.40" width="12.60" height="6.40" fill="#209898" stroke="#404040" stroke-width="1"/>
<rect x="1006.00" y="527.40" width="14.60" height="2.20" fill="#b0b0b0" stroke="#505050" stroke-width="0.7"/>
<rect x="1009.00" y="530.20" width="12.00" height="1.60" fill="#707070" />
<path d="M1020.6,528 L1029.6,533.2 M1029.6,528 L1020.6,533.2" fill="none" stroke="#e82020" stroke-width="2" />
<path d="M1036.8,520.4 L1041,521.6 L1046,520.2 L1051,521.6 L1055.2,520.4 L1054.4,529 L1046,533.6 L1037.6,529 Z" fill="#2030c0" stroke="#101868" stroke-width="0.8" />
<path d="M1040.6,522.8 L1051.4,522.8 L1050.8,528.6 L1046,531.2 L1041.2,528.6 Z" fill="#f0f0f8" stroke="none" stroke-width="1" />
<path d="M1042.2,523.6 L1046,529.4 L1049.8,523.6" fill="none" stroke="#d82020" stroke-width="1.7" />
<rect x="1062.00" y="520.20" width="24.40" height="13.00" fill="#101010" />
<rect x="1063.40" y="521.40" width="6.00" height="8.80" fill="#f0f0f0" />
<rect x="1070.60" y="523.20" width="13.40" height="5.80" fill="#50d0d8" />
<line x1="1064.00" y1="531.60" x2="1085.00" y2="531.60" stroke="#d8d8d8" stroke-width="1.1" stroke-dasharray="1.6 1.2"/>
<path d="M1090.4,526.6 L1100,521.4 L1100,531.6 Z" fill="#58b8d8" stroke="none" stroke-width="1" />
<ellipse cx="1103.60" cy="521.80" rx="4.40" ry="2.20" fill="#3858a8" stroke="none" stroke-width="1" />
<path d="M1098,524 L1104,524 L1104,530 L1098,530 Z" fill="#e8d030" stroke="none" stroke-width="1" />
<path d="M1100,526 L1108,522.4" fill="none" stroke="#40a840" stroke-width="1.8" />
<ellipse cx="1108.60" cy="530.00" rx="5.60" ry="3.40" fill="#e82828" stroke="none" stroke-width="1" />
<path d="M1105.6,528.4 L1111.6,531.6 M1111.6,528.4 L1105.6,531.6" fill="none" stroke="#f8f8f8" stroke-width="1.3" />
<rect x="1118.80" y="520.00" width="25.20" height="13.40" fill="#e02020" />
<rect x="1121.40" y="521.40" width="20.00" height="10.60" fill="#fbeeee" />
<ellipse cx="1130.00" cy="526.70" rx="7.40" ry="4.40" fill="#e02020" stroke="none" stroke-width="1" />
<ellipse cx="1134.40" cy="526.70" rx="5.40" ry="3.60" fill="#fbeeee" stroke="none" stroke-width="1" />
<ellipse cx="1135.60" cy="526.70" rx="4.60" ry="3.40" fill="#e02020" stroke="none" stroke-width="1" />
<text x="1168.80" y="531.80" font-size="10.6" fill="#101010" textLength="41.00" lengthAdjust="spacingAndGlyphs" >10:08</text>
<text x="1217.00" y="531.80" font-size="10.6" fill="#101010" textLength="22.40" lengthAdjust="spacingAndGlyphs" >AM</text>
</svg>
</body></html>
